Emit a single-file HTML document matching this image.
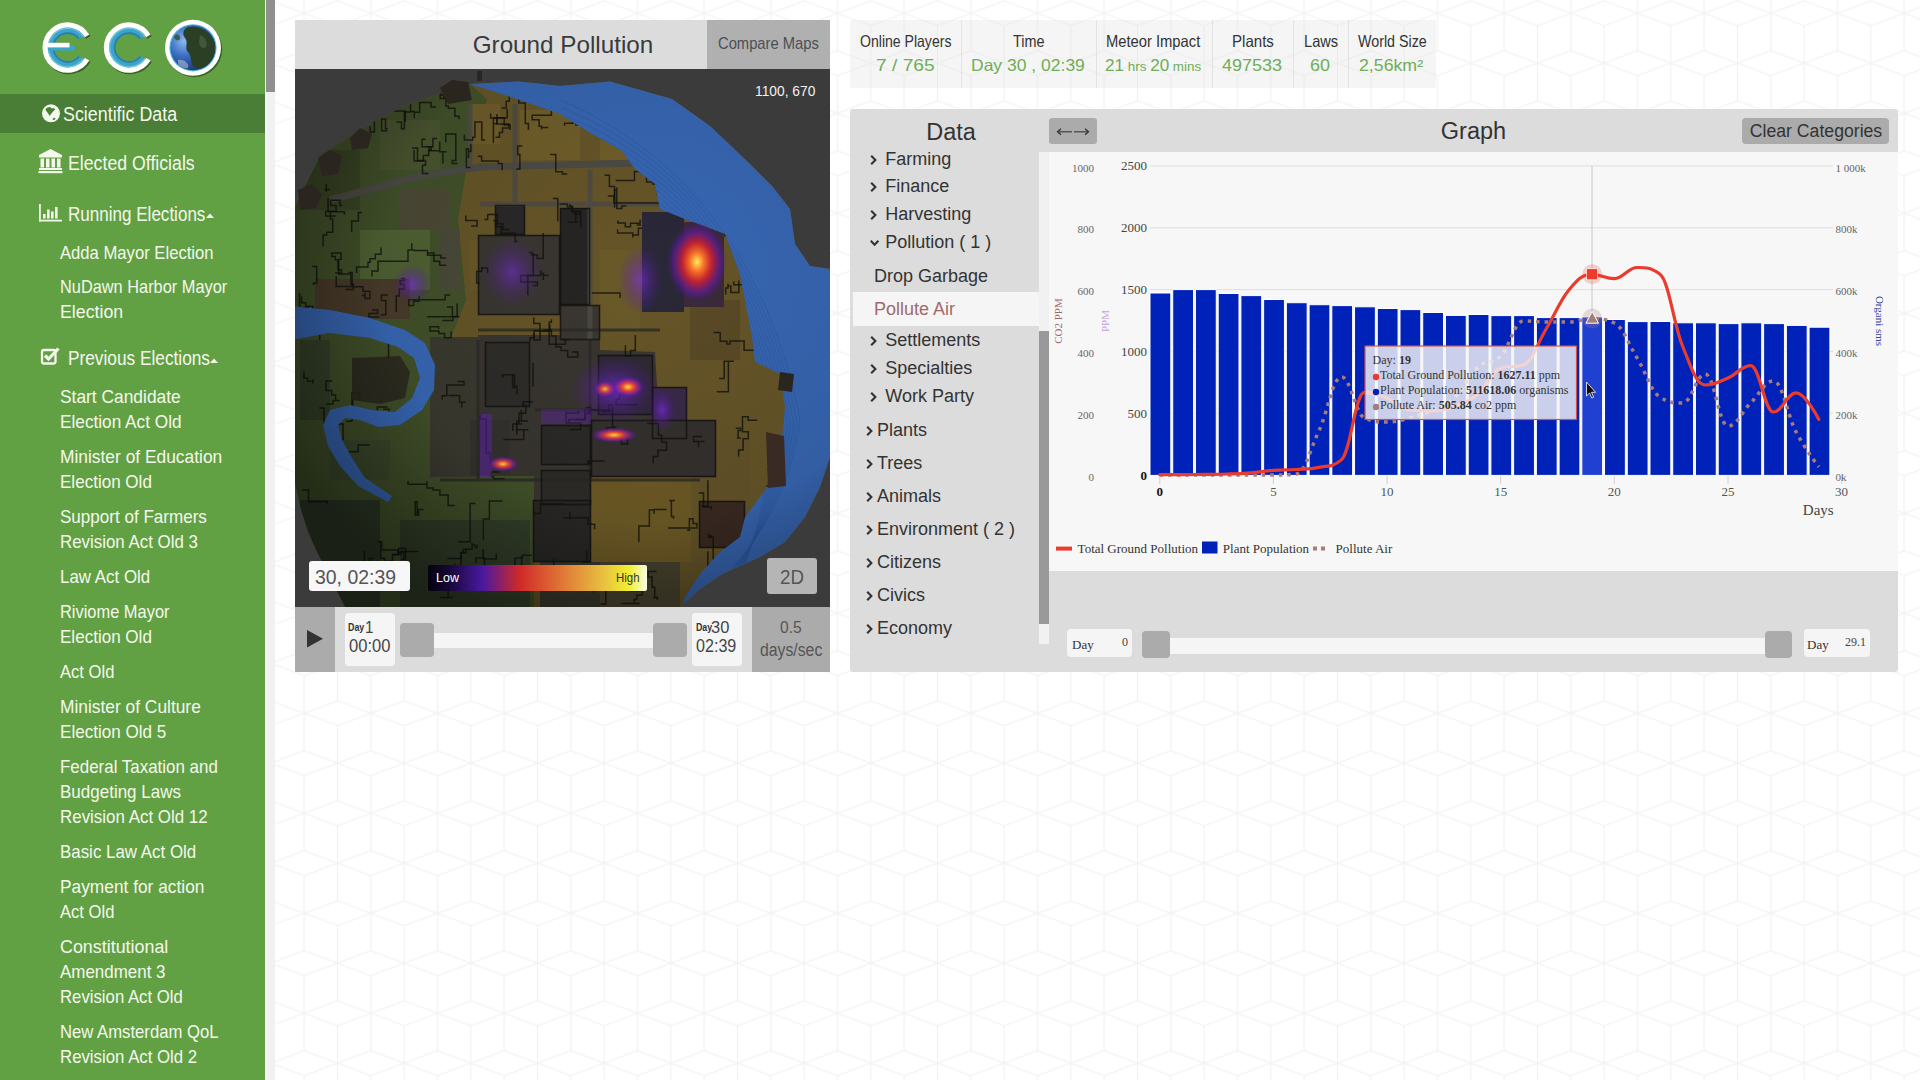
<!DOCTYPE html><html><head><meta charset="utf-8"><style>
html,body{margin:0;padding:0;width:1920px;height:1080px;overflow:hidden;background:#fff;}
body{position:relative;font-family:"Liberation Sans",sans-serif;}
.t{position:absolute;white-space:nowrap;}
.b{position:absolute;}
svg{position:absolute;}
</style></head><body>
<svg style="left:0;top:0" width="1920" height="1080">
<defs><pattern id="hex" x="37.5" y="0.7" width="66.667" height="100" patternUnits="userSpaceOnUse">
<g fill="none" stroke="#f0f0f0" stroke-width="1">
<path d="M0 12.5 L33.333 0 L66.667 12.5 L33.333 25 Z"/>
<path d="M0 12.5 V50 M66.667 12.5 V50 M33.333 25 V100"/>
<path d="M0 50 L33.333 62.5 L0 75 M66.667 50 L33.333 62.5 L66.667 75"/>
<path d="M0 75 V100 M66.667 75 V100 M0 0 V12.5 M66.667 0 V12.5"/>
</g></pattern></defs>
<rect x="275" y="0" width="1645" height="1080" fill="url(#hex)"/></svg>
<div class="b" style="left:0px;top:0px;width:265px;height:1080px;background:#62a044;"></div>
<div class="b" style="left:265px;top:0px;width:10px;height:1080px;background:#f1f1f1;"></div>
<div class="b" style="left:265px;top:92px;width:2px;height:988px;background:#fafafa;"></div>
<div class="b" style="left:266px;top:0px;width:9px;height:92px;background:#8f8f8f;"></div>
<div class="b" style="left:0px;top:94px;width:265px;height:39px;background:#4a7d35;"></div>
<svg style="left:30px;top:10px" width="210" height="80" viewBox="30 10 210 80">
<defs>
<radialGradient id="gl" cx="0.3" cy="0.35" r="0.75"><stop offset="0" stop-color="#8ab8f0"/><stop offset="0.45" stop-color="#3a6cc0"/><stop offset="1" stop-color="#14306a"/></radialGradient>
<linearGradient id="teal" x1="0" y1="0" x2="0" y2="1"><stop offset="0" stop-color="#2a8db8"/><stop offset="0.5" stop-color="#4fb8dc"/><stop offset="1" stop-color="#2a8db8"/></linearGradient>
<clipPath id="gclip"><circle cx="193" cy="47.8" r="22.5"/></clipPath>
</defs>
<g opacity="0.55" transform="translate(1.2,1.4)">
<path d="M87.07 35.96 A22.6 22.6 0 1 0 87.07 59.24" fill="none" stroke="#1a3010" stroke-width="5.2"/>
<path d="M148.37 35.96 A22.6 22.6 0 1 0 148.37 59.24" fill="none" stroke="#1a3010" stroke-width="5.2"/>
<circle cx="193" cy="47.8" r="28" fill="#1a3010"/>
</g>
<path d="M81.29 37.73 A16.8 16.8 0 1 0 81.29 57.47" fill="none" stroke="#3aa4cc" stroke-width="6.6"/>
<path d="M79.05 38.73 A14.4 14.4 0 1 0 79.05 56.47" fill="none" stroke="#2a7fa8" stroke-width="1.8"/>
<path d="M83.43 36.59 A19.2 19.2 0 1 0 83.43 58.61" fill="none" stroke="#6ec6e4" stroke-width="1.1"/>
<path d="M87.07 35.96 A22.6 22.6 0 1 0 87.07 59.24" fill="none" stroke="#fff" stroke-width="5.2"/>
<rect x="48" y="45.5" width="26.6" height="5" fill="#3aa4cc"/>
<rect x="44.5" y="42.8" width="25" height="4.6" fill="#fff"/>
<path d="M142.59 37.73 A16.8 16.8 0 1 0 142.59 57.47" fill="none" stroke="#3aa4cc" stroke-width="6.6"/>
<path d="M140.35 38.73 A14.4 14.4 0 1 0 140.35 56.47" fill="none" stroke="#2a7fa8" stroke-width="1.8"/>
<path d="M144.73 36.59 A19.2 19.2 0 1 0 144.73 58.61" fill="none" stroke="#6ec6e4" stroke-width="1.1"/>
<path d="M148.37 35.96 A22.6 22.6 0 1 0 148.37 59.24" fill="none" stroke="#fff" stroke-width="5.2"/>
<circle cx="193" cy="47.8" r="28" fill="#fff"/>
<circle cx="193" cy="47.8" r="23.6" fill="#52b4dc"/>
<circle cx="193" cy="47.8" r="22.5" fill="url(#gl)"/>
<g clip-path="url(#gclip)">
<path d="M188 27 C196 25 206 29 212 37 C217 46 216 56 209 64 C203 69 196 70 193 66 C190 61 192 56 188 52 C184 48 189 43 185 38 C182 34 183 29 188 27 Z" fill="#2b3f24"/>
<path d="M200 35 C205 37 208 42 206 47 C203 50 199 46 199 42 Z" fill="#4a5f40" opacity="0.8"/>
<path d="M174 36 C177 33 181 35 180 39 C178 42 174 40 174 36 Z" fill="#35502e" opacity="0.8"/>
<path d="M178 60 C184 59 190 64 188 68 C182 69 177 66 178 60 Z" fill="#d8e0e8" opacity="0.45"/>
</g>
</svg>
<svg style="left:36px;top:100px" width="30" height="130" viewBox="36 100 30 130">
<circle cx="51" cy="113.3" r="9" fill="#f4f8ec"/>
<path d="M45.3 109.2 L47.5 107.6 L50.2 107.1 L51.6 108.6 L53.4 108.1 L55.3 109.3 L53 111.6 L51 114 L49.6 115.9 L48.2 113.6 L46.6 111.6 Z" fill="#4a7d35"/>
<path d="M52.4 119.8 L53.6 117.8 L55.6 117.9 L54.4 120.1 Z" fill="#4a7d35"/>
<g fill="#f4f8ec">
<path d="M39 155 L50.5 149 L62 155 L62 157.5 L39 157.5 Z"/>
<rect x="40.5" y="158.5" width="3.5" height="9"/><rect x="46" y="158.5" width="3.5" height="9"/><rect x="51.5" y="158.5" width="3.5" height="9"/><rect x="57" y="158.5" width="3.5" height="9"/>
<rect x="39" y="168" width="23" height="2"/><rect x="38.5" y="171" width="24" height="2.2"/>
</g>
<g fill="#f4f8ec">
<rect x="39" y="204" width="1.8" height="17.5"/><rect x="39" y="219.7" width="23" height="1.8"/>
<rect x="43" y="214" width="2.6" height="4.5"/><rect x="47" y="209.5" width="2.6" height="9"/><rect x="51" y="211.5" width="2.6" height="7"/><rect x="55" y="207" width="2.6" height="11.5"/>
</g>
</svg>
<svg style="left:60.20px;top:94.80px;overflow:visible" width="120.2" height="36.0"><text x="3" y="26.00" textLength="114.20" lengthAdjust="spacingAndGlyphs" font-size="20" font-family="'Liberation Sans', sans-serif" font-weight="normal" fill="#f4f8ec" style="">Scientific Data</text></svg>
<svg style="left:64.80px;top:143.90px;overflow:visible" width="132.7" height="36.0"><text x="3" y="26.00" textLength="126.70" lengthAdjust="spacingAndGlyphs" font-size="20" font-family="'Liberation Sans', sans-serif" font-weight="normal" fill="#f4f8ec" style="">Elected Officials</text></svg>
<svg style="left:64.80px;top:194.50px;overflow:visible" width="143.4" height="36.0"><text x="3" y="26.00" textLength="137.40" lengthAdjust="spacingAndGlyphs" font-size="20" font-family="'Liberation Sans', sans-serif" font-weight="normal" fill="#f4f8ec" style="">Running Elections</text></svg>
<svg style="left:200px;top:210px" width="20" height="10" viewBox="200 210 20 10"><path d="M206 218 L210 213.5 L214 218 Z" fill="#f4f8ec"/></svg>
<svg style="left:36px;top:344px" width="30" height="26" viewBox="36 344 30 26">
<rect x="42" y="350" width="13.5" height="13.5" rx="2" fill="none" stroke="#f4f8ec" stroke-width="2.3"/>
<path d="M45 355.5 L48.5 359 L58.5 348.5" fill="none" stroke="#f4f8ec" stroke-width="3.2"/>
</svg>
<svg style="left:65.30px;top:339.30px;overflow:visible" width="148.0" height="36.0"><text x="3" y="26.00" textLength="142.00" lengthAdjust="spacingAndGlyphs" font-size="20" font-family="'Liberation Sans', sans-serif" font-weight="normal" fill="#f4f8ec" style="">Previous Elections</text></svg>
<svg style="left:205px;top:355px" width="20" height="10" viewBox="205 355 20 10"><path d="M210 363 L214 358.5 L218 363 Z" fill="#f4f8ec"/></svg>
<svg style="left:56.66px;top:233.50px;overflow:visible" width="159.6" height="34.2"><text x="3" y="24.70" textLength="153.60" lengthAdjust="spacingAndGlyphs" font-size="19" font-family="'Liberation Sans', sans-serif" font-weight="normal" fill="#f4f8ec" style="">Adda Mayor Election</text></svg>
<svg style="left:56.66px;top:268.30px;overflow:visible" width="173.2" height="34.2"><text x="3" y="24.70" textLength="167.20" lengthAdjust="spacingAndGlyphs" font-size="19" font-family="'Liberation Sans', sans-serif" font-weight="normal" fill="#f4f8ec" style="">NuDawn Harbor Mayor</text></svg>
<svg style="left:56.66px;top:293.30px;overflow:visible" width="69.2" height="34.2"><text x="3" y="24.70" textLength="63.20" lengthAdjust="spacingAndGlyphs" font-size="19" font-family="'Liberation Sans', sans-serif" font-weight="normal" fill="#f4f8ec" style="">Election</text></svg>
<svg style="left:56.66px;top:378.30px;overflow:visible" width="126.7" height="34.2"><text x="3" y="24.70" textLength="120.70" lengthAdjust="spacingAndGlyphs" font-size="19" font-family="'Liberation Sans', sans-serif" font-weight="normal" fill="#f4f8ec" style="">Start Candidate</text></svg>
<svg style="left:56.66px;top:403.30px;overflow:visible" width="127.6" height="34.2"><text x="3" y="24.70" textLength="121.60" lengthAdjust="spacingAndGlyphs" font-size="19" font-family="'Liberation Sans', sans-serif" font-weight="normal" fill="#f4f8ec" style="">Election Act Old</text></svg>
<svg style="left:56.66px;top:438.30px;overflow:visible" width="168.2" height="34.2"><text x="3" y="24.70" textLength="162.20" lengthAdjust="spacingAndGlyphs" font-size="19" font-family="'Liberation Sans', sans-serif" font-weight="normal" fill="#f4f8ec" style="">Minister of Education</text></svg>
<svg style="left:56.66px;top:463.30px;overflow:visible" width="97.9" height="34.2"><text x="3" y="24.70" textLength="91.90" lengthAdjust="spacingAndGlyphs" font-size="19" font-family="'Liberation Sans', sans-serif" font-weight="normal" fill="#f4f8ec" style="">Election Old</text></svg>
<svg style="left:56.66px;top:498.30px;overflow:visible" width="152.9" height="34.2"><text x="3" y="24.70" textLength="146.90" lengthAdjust="spacingAndGlyphs" font-size="19" font-family="'Liberation Sans', sans-serif" font-weight="normal" fill="#f4f8ec" style="">Support of Farmers</text></svg>
<svg style="left:56.66px;top:523.30px;overflow:visible" width="143.9" height="34.2"><text x="3" y="24.70" textLength="137.90" lengthAdjust="spacingAndGlyphs" font-size="19" font-family="'Liberation Sans', sans-serif" font-weight="normal" fill="#f4f8ec" style="">Revision Act Old 3</text></svg>
<svg style="left:56.66px;top:558.30px;overflow:visible" width="96.2" height="34.2"><text x="3" y="24.70" textLength="90.20" lengthAdjust="spacingAndGlyphs" font-size="19" font-family="'Liberation Sans', sans-serif" font-weight="normal" fill="#f4f8ec" style="">Law Act Old</text></svg>
<svg style="left:56.66px;top:593.30px;overflow:visible" width="115.5" height="34.2"><text x="3" y="24.70" textLength="109.50" lengthAdjust="spacingAndGlyphs" font-size="19" font-family="'Liberation Sans', sans-serif" font-weight="normal" fill="#f4f8ec" style="">Riviome Mayor</text></svg>
<svg style="left:56.66px;top:618.30px;overflow:visible" width="97.9" height="34.2"><text x="3" y="24.70" textLength="91.90" lengthAdjust="spacingAndGlyphs" font-size="19" font-family="'Liberation Sans', sans-serif" font-weight="normal" fill="#f4f8ec" style="">Election Old</text></svg>
<svg style="left:56.66px;top:653.30px;overflow:visible" width="60.4" height="34.2"><text x="3" y="24.70" textLength="54.40" lengthAdjust="spacingAndGlyphs" font-size="19" font-family="'Liberation Sans', sans-serif" font-weight="normal" fill="#f4f8ec" style="">Act Old</text></svg>
<svg style="left:56.66px;top:688.30px;overflow:visible" width="146.8" height="34.2"><text x="3" y="24.70" textLength="140.80" lengthAdjust="spacingAndGlyphs" font-size="19" font-family="'Liberation Sans', sans-serif" font-weight="normal" fill="#f4f8ec" style="">Minister of Culture</text></svg>
<svg style="left:56.66px;top:713.30px;overflow:visible" width="112.2" height="34.2"><text x="3" y="24.70" textLength="106.20" lengthAdjust="spacingAndGlyphs" font-size="19" font-family="'Liberation Sans', sans-serif" font-weight="normal" fill="#f4f8ec" style="">Election Old 5</text></svg>
<svg style="left:56.66px;top:748.30px;overflow:visible" width="163.8" height="34.2"><text x="3" y="24.70" textLength="157.80" lengthAdjust="spacingAndGlyphs" font-size="19" font-family="'Liberation Sans', sans-serif" font-weight="normal" fill="#f4f8ec" style="">Federal Taxation and</text></svg>
<svg style="left:56.66px;top:773.30px;overflow:visible" width="127.0" height="34.2"><text x="3" y="24.70" textLength="121.00" lengthAdjust="spacingAndGlyphs" font-size="19" font-family="'Liberation Sans', sans-serif" font-weight="normal" fill="#f4f8ec" style="">Budgeting Laws</text></svg>
<svg style="left:56.66px;top:798.30px;overflow:visible" width="153.7" height="34.2"><text x="3" y="24.70" textLength="147.70" lengthAdjust="spacingAndGlyphs" font-size="19" font-family="'Liberation Sans', sans-serif" font-weight="normal" fill="#f4f8ec" style="">Revision Act Old 12</text></svg>
<svg style="left:56.66px;top:833.30px;overflow:visible" width="142.2" height="34.2"><text x="3" y="24.70" textLength="136.20" lengthAdjust="spacingAndGlyphs" font-size="19" font-family="'Liberation Sans', sans-serif" font-weight="normal" fill="#f4f8ec" style="">Basic Law Act Old</text></svg>
<svg style="left:56.66px;top:868.30px;overflow:visible" width="150.4" height="34.2"><text x="3" y="24.70" textLength="144.40" lengthAdjust="spacingAndGlyphs" font-size="19" font-family="'Liberation Sans', sans-serif" font-weight="normal" fill="#f4f8ec" style="">Payment for action</text></svg>
<svg style="left:56.66px;top:893.30px;overflow:visible" width="60.4" height="34.2"><text x="3" y="24.70" textLength="54.40" lengthAdjust="spacingAndGlyphs" font-size="19" font-family="'Liberation Sans', sans-serif" font-weight="normal" fill="#f4f8ec" style="">Act Old</text></svg>
<svg style="left:56.66px;top:928.30px;overflow:visible" width="114.3" height="34.2"><text x="3" y="24.70" textLength="108.30" lengthAdjust="spacingAndGlyphs" font-size="19" font-family="'Liberation Sans', sans-serif" font-weight="normal" fill="#f4f8ec" style="">Constitutional</text></svg>
<svg style="left:56.66px;top:953.30px;overflow:visible" width="111.5" height="34.2"><text x="3" y="24.70" textLength="105.50" lengthAdjust="spacingAndGlyphs" font-size="19" font-family="'Liberation Sans', sans-serif" font-weight="normal" fill="#f4f8ec" style="">Amendment 3</text></svg>
<svg style="left:56.66px;top:978.30px;overflow:visible" width="128.8" height="34.2"><text x="3" y="24.70" textLength="122.80" lengthAdjust="spacingAndGlyphs" font-size="19" font-family="'Liberation Sans', sans-serif" font-weight="normal" fill="#f4f8ec" style="">Revision Act Old</text></svg>
<svg style="left:56.66px;top:1013.30px;overflow:visible" width="164.5" height="34.2"><text x="3" y="24.70" textLength="158.50" lengthAdjust="spacingAndGlyphs" font-size="19" font-family="'Liberation Sans', sans-serif" font-weight="normal" fill="#f4f8ec" style="">New Amsterdam QoL</text></svg>
<svg style="left:56.66px;top:1038.30px;overflow:visible" width="143.2" height="34.2"><text x="3" y="24.70" textLength="137.20" lengthAdjust="spacingAndGlyphs" font-size="19" font-family="'Liberation Sans', sans-serif" font-weight="normal" fill="#f4f8ec" style="">Revision Act Old 2</text></svg>
<div class="b" style="left:295px;top:20px;width:535px;height:49px;background:#dcdcdc;"></div>
<div class="b" style="left:707px;top:20px;width:123px;height:49px;background:#b0b0b0;"></div>
<div class="t" style="left:-37.50px;width:1200px;top:32.58px;font-size:24px;line-height:24px;color:#3a3a3a;font-family:'Liberation Sans', sans-serif;text-align:center;font-weight:normal;transform:scaleX(1.01);transform-origin:50% 0;">Ground Pollution</div>
<svg style="left:715.17px;top:27.10px;overflow:visible" width="106.9" height="30.6"><text x="3" y="22.10" textLength="100.90" lengthAdjust="spacingAndGlyphs" font-size="17" font-family="'Liberation Sans', sans-serif" font-weight="normal" fill="#4a4f55" style="">Compare Maps</text></svg>
<svg style="left:295px;top:69px" width="535" height="538" viewBox="295 69 535 538">
<defs><clipPath id="globe"><path d="M295.0 484.0 L295.0 206.0 L320.0 156.0 L357.0 131.0 L400.0 108.0 L432.0 96.0 L470.0 84.0 L519.0 81.5 L560.0 86.0 L610.0 81.5 L672.0 99.0 L710.0 126.0 L750.0 164.0 L772.0 186.0 L790.0 209.0 L795.0 244.0 L810.0 266.0 L830.0 269.0 L830.0 457.0 L820.0 487.0 L805.0 517.0 L785.0 542.0 L760.0 557.0 L722.0 574.0 L700.0 589.0 L682.0 605.0 L680.0 607.0 L345.0 607.0 L330.0 578.0 L316.0 550.0 L308.0 532.0 L301.0 510.0 Z"/></clipPath>
<radialGradient id="shade" cx="0.6" cy="0.38" r="0.68">
<stop offset="0" stop-color="#000" stop-opacity="0"/><stop offset="0.65" stop-color="#000" stop-opacity="0.08"/><stop offset="1" stop-color="#000" stop-opacity="0.45"/></radialGradient>
<radialGradient id="heat1"><stop offset="0" stop-color="#fff060"/><stop offset="0.22" stop-color="#ff7a28"/><stop offset="0.5" stop-color="#d82030" stop-opacity="0.85"/><stop offset="0.78" stop-color="#6a18b0" stop-opacity="0.55"/><stop offset="1" stop-color="#5010a0" stop-opacity="0"/></radialGradient>
<radialGradient id="heat2"><stop offset="0" stop-color="#ffe048"/><stop offset="0.35" stop-color="#f04a30"/><stop offset="0.7" stop-color="#9020b0" stop-opacity="0.6"/><stop offset="1" stop-color="#4010a0" stop-opacity="0"/></radialGradient>
<radialGradient id="purp"><stop offset="0" stop-color="#7a2ee0" stop-opacity="0.8"/><stop offset="1" stop-color="#5010a0" stop-opacity="0"/></radialGradient>
<linearGradient id="cbar" x1="0" x2="1"><stop offset="0" stop-color="#050210"/><stop offset="0.08" stop-color="#12062e"/><stop offset="0.25" stop-color="#4a18a0"/><stop offset="0.42" stop-color="#d02a28"/><stop offset="0.62" stop-color="#e07a38"/><stop offset="0.8" stop-color="#e8c040"/><stop offset="0.92" stop-color="#f0f030"/><stop offset="1" stop-color="#fbfbe8"/></linearGradient>
</defs>
<rect x="295" y="69" width="535" height="538" fill="#3b3b3b"/>
<g clip-path="url(#globe)">
<rect x="290" y="60" width="600" height="560" fill="#665528"/>
<path d="M290.0 140.0 L470.0 84.0 L487.0 99.0 L468.0 160.0 L458.0 220.0 L466.0 300.0 L448.0 345.0 L432.0 420.0 L440.0 476.0 L534.0 476.0 L534.0 607.0 L290.0 607.0 Z" fill="#42512a"/>
<path d="M478.0 335.0 L600.0 335.0 L600.0 350.0 L655.0 352.0 L662.0 470.0 L590.0 476.0 L590.0 562.0 L534.0 562.0 L534.0 476.0 L478.0 476.0 Z" fill="#393631"/>
<rect x="300" y="150" width="60" height="60" fill="#3a4624"/>
<rect x="380" y="120" width="60" height="50" fill="#4a5530"/>
<rect x="400" y="190" width="50" height="40" fill="#4c4a36"/>
<rect x="360" y="230" width="70" height="60" fill="#506234"/>
<rect x="315" y="279" width="95" height="40" fill="#4a3c2a"/>
<rect x="300" y="340" width="30" height="80" fill="#36432a"/>
<rect x="440" y="230" width="20" height="60" fill="#4a4a3a"/>
<rect x="330" y="440" width="60" height="40" fill="#3c4a2c"/>
<rect x="300" y="500" width="80" height="107" fill="#2f3a26"/>
<rect x="400" y="520" width="130" height="87" fill="#34402a"/>
<rect x="470" y="104" width="30" height="40" fill="#6e5c2a"/>
<rect x="520" y="110" width="60" height="50" fill="#705e2a"/>
<rect x="600" y="120" width="40" height="40" fill="#705e2a"/>
<rect x="470" y="240" width="30" height="50" fill="#6a5828"/>
<rect x="600" y="250" width="40" height="80" fill="#6a5a2a"/>
<rect x="495" y="205" width="30" height="30" fill="#2a2828"/>
<rect x="560" y="208" width="30" height="97" fill="#272523"/>
<rect x="485" y="342" width="45" height="65" fill="#2e2d2a"/>
<rect x="541" y="425" width="50" height="40" fill="#2c2a28"/>
<rect x="541" y="470" width="50" height="35" fill="#2e2c29"/>
<rect x="533" y="500" width="58" height="62" fill="#2a2826"/>
<rect x="598" y="355" width="55" height="60" fill="#2e2a32"/>
<rect x="652" y="387" width="35" height="52" fill="#3a2a48"/>
<rect x="591" y="476" width="100" height="86" fill="#6e5b26"/>
<rect x="700" y="440" width="50" height="90" fill="#64532a"/>
<rect x="690" y="300" width="50" height="60" fill="#5a4a26"/>
<rect x="478" y="235" width="82" height="80" fill="#3a3732"/>
<rect x="591" y="420" width="125" height="57" fill="#34312e"/>
<rect x="430" y="337" width="50" height="140" fill="#3a3a30"/>
<rect x="699" y="501" width="46" height="47" fill="#3a2a22"/>
<rect x="560" y="305" width="40" height="35" fill="#3a3732"/>
<rect x="600" y="562" width="80" height="45" fill="#4a4530"/>
<rect x="540" y="562" width="60" height="45" fill="#3a3a30"/>
<rect x="470" y="420" width="40" height="55" fill="#33322e"/>
<path d="M330 200 L420 176 L480 167 L640 163" stroke="#4c4b45" stroke-width="7" fill="none"/>
<path d="M515 104 V205 M590 170 V340 M480 204 H700 M470 104 V165" stroke="#4c4b45" stroke-width="5" fill="none" opacity="0.85"/>
<path d="M478 330 H660 M478 340 V480 M535 410 H600 M590 340 V480 M440 480 H700" stroke="#2a2926" stroke-width="3" fill="none" opacity="0.8"/>
<path d="M512.6 375.5 L512.6 378.4 L512.6 381.4 L512.6 387.8 L516.9 387.8 L516.9 394.0 L516.9 389.0 L516.9 386.0 L514.5 386.0 L514.5 379.3 L514.5 374.8 L511.9 374.8 L506.5 374.8 L502.6 374.8 L502.6 377.8" stroke="#12110c" stroke-width="1.5" fill="none" opacity="0.8"/>
<path d="M446.3 97.7 L448.8 97.7 L444.0 97.7 L444.0 95.1 L440.9 95.1 L440.9 91.6 L434.6 91.6 L434.6 88.5 L431.2 88.5" stroke="#12110c" stroke-width="1.5" fill="none" opacity="0.8"/>
<path d="M573.9 213.9 L580.7 213.9 L580.7 216.9 L580.7 220.1 L580.7 223.1 L580.7 227.2 L580.7 224.0 L580.7 219.0 L580.7 216.7 L580.7 211.6 L578.6 211.6 L575.7 211.6 L571.9 211.6 L571.9 206.1 L569.8 206.1 L569.8 204.0" stroke="#12110c" stroke-width="1.5" fill="none" opacity="0.8"/>
<path d="M643.3 252.6 L643.3 247.0 L643.3 241.0 L643.3 234.5 L643.3 228.2 L638.4 228.2 L638.4 235.1 L632.7 235.1 L632.7 237.6 L632.7 233.1 L627.7 233.1 L624.2 233.1 L617.6 233.1 L617.6 229.5" stroke="#12110c" stroke-width="1.5" fill="none" opacity="0.8"/>
<path d="M502.5 501.1 L495.9 501.1 L489.4 501.1 L489.4 507.2 L489.4 513.3 L489.4 518.9 L483.3 518.9 L483.3 522.3 L483.3 527.5 L483.3 530.8 L483.3 533.4 L483.3 537.3 L483.3 540.5" stroke="#12110c" stroke-width="1.5" fill="none" opacity="0.8"/>
<path d="M551.4 108.4 L551.4 115.2 L545.1 115.2 L538.7 115.2 L532.2 115.2 L532.2 119.7 L539.1 119.7 L539.1 126.3 L541.6 126.3 L541.6 129.6 L541.6 127.4 L548.2 127.4" stroke="#12110c" stroke-width="1.5" fill="none" opacity="0.8"/>
<path d="M501.6 107.9 L506.2 107.9 L506.2 101.2 L509.3 101.2 L509.3 96.0 L509.3 92.4 L509.3 89.4 L509.3 84.5 L509.3 79.5 L509.3 75.5 L503.8 75.5 L510.6 75.5 L513.3 75.5 L513.3 71.1" stroke="#12110c" stroke-width="1.5" fill="none" opacity="0.8"/>
<path d="M590.4 561.9 L587.3 561.9 L582.2 561.9 L586.7 561.9 L586.7 557.7 L586.7 554.9 L586.7 550.3" stroke="#12110c" stroke-width="1.5" fill="none" opacity="0.8"/>
<path d="M702.7 208.7 L702.7 202.2 L705.2 202.2 L709.1 202.2 L709.1 196.7 L709.1 194.2 L709.1 190.4 L716.1 190.4 L718.2 190.4 L718.2 186.0 L721.0 186.0 L721.0 183.3" stroke="#12110c" stroke-width="1.5" fill="none" opacity="0.8"/>
<path d="M345.5 289.4 L349.3 289.4 L353.4 289.4 L353.4 284.3 L350.9 284.3 L350.9 277.6 L350.9 273.9 L345.2 273.9 L341.6 273.9 L338.7 273.9 L338.7 270.4 L338.7 263.9 L338.7 260.4" stroke="#12110c" stroke-width="1.5" fill="none" opacity="0.8"/>
<path d="M385.5 129.2 L385.5 122.3 L385.5 119.0 L381.6 119.0 L381.6 123.8 L381.6 130.7 L386.6 130.7 L386.6 127.9" stroke="#12110c" stroke-width="1.5" fill="none" opacity="0.8"/>
<path d="M532.9 401.7 L528.3 401.7 L523.0 401.7 L523.0 405.2 L525.8 405.2 L525.8 410.9 L525.8 413.3 L518.9 413.3 L518.9 418.9 L518.9 423.9 L521.9 423.9 L517.7 423.9 L512.8 423.9 L512.8 430.9" stroke="#12110c" stroke-width="1.5" fill="none" opacity="0.8"/>
<path d="M412.1 148.1 L417.5 148.1 L417.5 153.8 L417.5 160.4 L420.8 160.4 L425.5 160.4 L425.5 165.2 L422.5 165.2 L422.5 167.5 L422.5 173.4 L428.5 173.4" stroke="#12110c" stroke-width="1.5" fill="none" opacity="0.8"/>
<path d="M764.9 255.9 L762.4 255.9 L757.6 255.9 L751.7 255.9 L751.7 253.5 L751.7 250.1 L751.7 246.3 L751.7 239.7 L757.7 239.7 L764.4 239.7 L768.2 239.7 L771.2 239.7 L771.2 233.5 L771.2 227.1 L771.2 231.8 L771.2 237.9 L771.2 240.3" stroke="#12110c" stroke-width="1.5" fill="none" opacity="0.8"/>
<path d="M722.6 133.2 L717.0 133.2 L712.7 133.2 L710.0 133.2 L704.9 133.2 L704.9 129.5 L700.6 129.5 L698.6 129.5 L698.6 132.7 L698.6 136.3 L705.0 136.3 L707.8 136.3 L707.8 138.4 L710.8 138.4 L710.8 142.7 L710.8 146.7 L710.8 153.5" stroke="#12110c" stroke-width="1.5" fill="none" opacity="0.8"/>
<path d="M527.8 295.3 L527.8 291.3 L527.8 284.5 L527.8 282.2 L527.8 275.6 L534.2 275.6 L540.8 275.6 L540.8 270.5 L540.8 273.4 L543.4 273.4 L543.4 279.9 L543.4 275.2 L546.4 275.2 L548.5 275.2" stroke="#12110c" stroke-width="1.5" fill="none" opacity="0.8"/>
<path d="M744.9 581.6 L748.4 581.6 L753.9 581.6 L747.0 581.6 L743.1 581.6 L743.1 585.9 L743.1 588.9 L747.8 588.9 L753.2 588.9 L753.2 592.6 L753.2 596.2 L755.6 596.2 L759.7 596.2" stroke="#12110c" stroke-width="1.5" fill="none" opacity="0.8"/>
<path d="M342.3 205.6 L340.0 205.6 L340.0 200.3 L336.3 200.3 L330.8 200.3 L330.8 205.4 L336.1 205.4 L336.1 211.3 L330.2 211.3 L325.7 211.3 L325.7 215.9 L332.5 215.9 L335.7 215.9" stroke="#12110c" stroke-width="1.5" fill="none" opacity="0.8"/>
<path d="M454.7 563.8 L454.7 568.1 L454.7 572.8 L449.0 572.8 L442.3 572.8 L448.1 572.8 L448.1 578.9 L448.1 585.5 L448.1 591.8 L448.1 597.6 L452.7 597.6 L450.1 597.6 L444.2 597.6 L439.7 597.6" stroke="#12110c" stroke-width="1.5" fill="none" opacity="0.8"/>
<path d="M721.4 555.7 L721.4 560.0 L721.4 562.6 L716.8 562.6 L716.8 559.1 L713.2 559.1 L713.2 555.9 L713.2 549.0 L713.2 544.3 L713.2 537.3 L708.5 537.3 L708.5 533.2 L708.5 535.8 L712.0 535.8" stroke="#12110c" stroke-width="1.5" fill="none" opacity="0.8"/>
<path d="M380.8 314.8 L385.8 314.8 L385.8 311.3 L385.8 306.9 L385.8 300.4 L381.4 300.4 L381.4 297.4 L381.4 295.1 L387.9 295.1" stroke="#12110c" stroke-width="1.5" fill="none" opacity="0.8"/>
<path d="M363.4 444.9 L369.7 444.9 L364.1 444.9 L358.1 444.9 L358.1 451.8 L355.4 451.8 L348.8 451.8 L353.8 451.8" stroke="#12110c" stroke-width="1.5" fill="none" opacity="0.8"/>
<path d="M567.2 173.9 L562.5 173.9 L562.5 171.7 L555.8 171.7 L555.8 166.5 L555.8 161.9 L555.8 157.3 L555.8 154.5 L550.0 154.5" stroke="#12110c" stroke-width="1.5" fill="none" opacity="0.8"/>
<path d="M410.9 339.5 L405.9 339.5 L405.9 342.4 L401.7 342.4 L401.7 340.0 L401.7 334.0 L399.5 334.0 L399.5 330.7 L399.5 333.6 L399.5 339.7 L395.7 339.7" stroke="#12110c" stroke-width="1.5" fill="none" opacity="0.8"/>
<path d="M319.8 339.7 L319.8 332.7 L319.8 330.3 L319.8 323.4 L319.8 318.4 L319.8 314.3 L313.1 314.3 L308.1 314.3 L308.1 307.7 L301.8 307.7 L299.6 307.7 L299.6 301.7 L299.6 295.9 L299.6 293.0" stroke="#12110c" stroke-width="1.5" fill="none" opacity="0.8"/>
<path d="M497.0 114.1 L497.0 118.6 L497.0 123.9 L502.7 123.9 L508.9 123.9 L508.9 128.1 L502.5 128.1 L502.5 132.6 L499.4 132.6 L499.4 137.2 L495.5 137.2" stroke="#12110c" stroke-width="1.5" fill="none" opacity="0.8"/>
<path d="M551.4 319.2 L551.4 322.3 L549.2 322.3 L549.2 328.4 L549.2 334.9 L549.2 341.7 L549.2 344.2 L553.2 344.2 L555.9 344.2 L561.3 344.2 L565.4 344.2 L565.4 339.4 L569.2 339.4 L564.7 339.4 L561.5 339.4" stroke="#12110c" stroke-width="1.5" fill="none" opacity="0.8"/>
<path d="M719.1 378.5 L724.2 378.5 L724.2 371.8 L724.2 367.7 L724.2 361.3 L726.9 361.3 L733.8 361.3 L728.4 361.3 L728.4 365.3 L728.4 370.1 L728.4 376.9 L728.4 380.5 L728.4 387.3 L728.4 391.7 L722.6 391.7 L719.0 391.7 L716.7 391.7" stroke="#12110c" stroke-width="1.5" fill="none" opacity="0.8"/>
<path d="M631.2 147.5 L637.6 147.5 L642.1 147.5 L642.1 144.3 L647.9 144.3 L647.9 140.2 L647.9 134.1" stroke="#12110c" stroke-width="1.5" fill="none" opacity="0.8"/>
<path d="M614.6 207.8 L614.6 201.1 L614.6 197.0 L614.6 190.1 L616.8 190.1 L616.8 187.5 L616.8 191.9 L616.8 198.1 L616.8 203.9 L616.8 208.6 L619.3 208.6 L621.9 208.6 L621.9 205.9 L626.4 205.9" stroke="#12110c" stroke-width="1.5" fill="none" opacity="0.8"/>
<path d="M324.1 122.8 L328.5 122.8 L328.5 118.4 L330.8 118.4 L330.8 115.0 L330.8 110.8 L332.9 110.8" stroke="#12110c" stroke-width="1.5" fill="none" opacity="0.8"/>
<path d="M335.1 273.1 L341.5 273.1 L341.5 269.7 L338.0 269.7 L338.0 263.9 L338.0 259.8 L335.3 259.8 L335.3 256.5 L331.7 256.5 L331.7 253.1 L334.4 253.1 L337.1 253.1 L341.1 253.1 L341.1 259.3 L338.8 259.3" stroke="#12110c" stroke-width="1.5" fill="none" opacity="0.8"/>
<path d="M451.1 331.4 L451.1 337.8 L444.5 337.8 L444.5 335.8 L444.5 333.5 L438.9 333.5 L438.9 330.9 L434.6 330.9 L429.9 330.9 L429.9 326.7 L433.5 326.7 L438.6 326.7 L438.6 328.9" stroke="#12110c" stroke-width="1.5" fill="none" opacity="0.8"/>
<path d="M721.8 146.6 L721.8 142.1 L721.8 147.6 L717.1 147.6 L711.9 147.6 L711.9 152.1 L711.9 157.9 L711.9 160.7" stroke="#12110c" stroke-width="1.5" fill="none" opacity="0.8"/>
<path d="M317.3 266.4 L312.2 266.4 L316.7 266.4 L316.7 269.9 L316.7 276.9 L316.7 283.1 L313.6 283.1 L313.6 285.3" stroke="#12110c" stroke-width="1.5" fill="none" opacity="0.8"/>
<path d="M461.7 407.7 L461.7 402.2 L465.7 402.2 L459.6 402.2 L459.6 395.5 L454.7 395.5 L448.5 395.5" stroke="#12110c" stroke-width="1.5" fill="none" opacity="0.8"/>
<path d="M738.8 287.7 L738.8 283.9 L738.8 280.5 L738.8 282.6 L738.8 286.5 L738.8 292.4 L735.8 292.4 L730.8 292.4 L730.8 286.0 L728.0 286.0 L728.0 283.7 L728.0 287.9 L725.7 287.9 L725.7 294.5" stroke="#12110c" stroke-width="1.5" fill="none" opacity="0.8"/>
<path d="M533.8 513.5 L540.5 513.5 L540.5 508.2 L540.5 504.0 L546.7 504.0 L551.5 504.0 L558.5 504.0 L563.8 504.0" stroke="#12110c" stroke-width="1.5" fill="none" opacity="0.8"/>
<path d="M465.8 215.4 L465.8 220.4 L472.3 220.4 L477.1 220.4 L477.1 225.9 L471.1 225.9 L474.6 225.9" stroke="#12110c" stroke-width="1.5" fill="none" opacity="0.8"/>
<path d="M531.9 555.2 L528.8 555.2 L522.4 555.2 L522.4 557.9 L517.2 557.9 L514.8 557.9 L514.8 561.5 L514.8 564.3 L514.8 569.7 L521.6 569.7 L521.6 565.8 L521.6 562.1 L521.6 555.9" stroke="#12110c" stroke-width="1.5" fill="none" opacity="0.8"/>
<path d="M326.3 183.7 L326.3 186.8 L326.3 192.0 L326.3 189.5 L324.2 189.5 L327.6 189.5 L330.0 189.5" stroke="#12110c" stroke-width="1.5" fill="none" opacity="0.8"/>
<path d="M637.3 404.7 L631.9 404.7 L626.0 404.7 L621.8 404.7 L616.1 404.7 L616.1 399.3 L619.6 399.3 L619.6 396.3 L619.6 393.7 L623.8 393.7 L623.8 389.2 L623.8 386.7 L623.8 383.7 L628.8 383.7" stroke="#12110c" stroke-width="1.5" fill="none" opacity="0.8"/>
<path d="M569.9 519.6 L569.9 515.6 L569.9 511.8 L569.9 517.8 L563.4 517.8 L568.0 517.8 L573.1 517.8 L580.1 517.8 L584.5 517.8 L588.0 517.8 L588.0 524.2 L591.0 524.2 L594.6 524.2 L594.6 529.2" stroke="#12110c" stroke-width="1.5" fill="none" opacity="0.8"/>
<path d="M351.9 272.6 L348.6 272.6 L352.1 272.6 L352.1 275.4 L352.1 280.1 L352.1 286.7 L358.7 286.7 L363.0 286.7 L363.0 291.2 L369.8 291.2 L369.8 293.6 L369.8 296.2 L369.8 298.5 L364.9 298.5 L364.9 292.6 L364.9 295.5 L361.9 295.5" stroke="#12110c" stroke-width="1.5" fill="none" opacity="0.8"/>
<path d="M528.4 130.1 L528.4 123.6 L525.3 123.6 L525.3 117.3 L525.3 112.2 L525.3 105.7 L525.3 103.0 L521.8 103.0 L518.8 103.0 L518.8 97.6 L518.8 94.5 L521.9 94.5 L524.2 94.5 L524.2 90.8 L527.2 90.8" stroke="#12110c" stroke-width="1.5" fill="none" opacity="0.8"/>
<path d="M403.8 558.6 L403.8 555.3 L403.8 552.3 L398.2 552.3 L398.2 549.9 L394.1 549.9 L387.6 549.9 L381.6 549.9 L381.6 546.1 L381.6 541.7 L377.7 541.7 L380.8 541.7 L380.8 545.4 L380.8 552.1 L380.8 558.5 L384.6 558.5 L384.6 560.9" stroke="#12110c" stroke-width="1.5" fill="none" opacity="0.8"/>
<path d="M323.1 246.5 L323.1 241.8 L323.1 235.1 L326.7 235.1 L326.7 232.3 L332.7 232.3 L332.7 226.1 L332.7 219.2 L330.4 219.2 L330.4 216.1 L330.4 211.6" stroke="#12110c" stroke-width="1.5" fill="none" opacity="0.8"/>
<path d="M385.8 97.7 L390.9 97.7 L390.9 94.2 L390.9 90.1 L397.5 90.1 L397.5 83.7 L397.5 80.2 L402.4 80.2 L404.9 80.2 L404.9 75.7 L406.9 75.7 L406.9 70.6" stroke="#12110c" stroke-width="1.5" fill="none" opacity="0.8"/>
<path d="M533.8 335.7 L533.8 333.5 L533.8 337.5 L533.8 340.0 L540.1 340.0 L540.1 335.5 L540.1 331.2 L543.4 331.2 L549.8 331.2 L549.8 329.0 L549.8 324.6" stroke="#12110c" stroke-width="1.5" fill="none" opacity="0.8"/>
<path d="M487.9 569.3 L484.5 569.3 L484.5 563.4 L484.5 557.7 L480.5 557.7 L476.0 557.7 L476.0 559.8 L476.0 563.0" stroke="#12110c" stroke-width="1.5" fill="none" opacity="0.8"/>
<path d="M372.0 310.0 L375.4 310.0 L377.7 310.0 L377.7 313.5 L374.6 313.5 L369.0 313.5 L369.0 316.9 L373.0 316.9 L379.3 316.9" stroke="#12110c" stroke-width="1.5" fill="none" opacity="0.8"/>
<path d="M401.3 559.3 L405.6 559.3 L405.6 552.6 L405.6 548.5 L398.7 548.5 L398.7 554.5 L392.7 554.5 L399.6 554.5" stroke="#12110c" stroke-width="1.5" fill="none" opacity="0.8"/>
<path d="M418.7 551.4 L413.7 551.4 L407.7 551.4 L401.4 551.4 L401.4 554.6 L395.7 554.6 L392.5 554.6 L392.5 561.2 L386.3 561.2 L386.3 567.6 L383.0 567.6" stroke="#12110c" stroke-width="1.5" fill="none" opacity="0.8"/>
<path d="M396.2 311.9 L396.2 306.8 L396.2 302.1 L396.2 296.1 L399.3 296.1 L399.3 289.1 L404.3 289.1 L404.3 284.3 L400.2 284.3 L400.2 280.8 L404.7 280.8 L404.7 278.4 L400.9 278.4" stroke="#12110c" stroke-width="1.5" fill="none" opacity="0.8"/>
<path d="M620.1 297.9 L620.1 293.0 L614.3 293.0 L607.7 293.0 L601.2 293.0 L598.9 293.0 L596.8 293.0 L594.8 293.0 L591.7 293.0" stroke="#12110c" stroke-width="1.5" fill="none" opacity="0.8"/>
<path d="M571.8 352.0 L577.8 352.0 L577.8 355.0 L577.8 357.1 L572.8 357.1 L567.7 357.1 L567.7 350.6 L561.1 350.6 L561.1 346.8 L555.9 346.8 L555.9 343.9 L555.9 339.6 L555.9 336.0 L551.4 336.0 L551.4 330.1 L547.8 330.1 L543.1 330.1" stroke="#12110c" stroke-width="1.5" fill="none" opacity="0.8"/>
<path d="M496.3 553.5 L496.3 559.0 L491.5 559.0 L488.0 559.0 L483.1 559.0 L483.1 554.7 L483.1 548.9" stroke="#12110c" stroke-width="1.5" fill="none" opacity="0.8"/>
<path d="M625.4 345.2 L625.4 349.6 L625.4 356.0 L627.6 356.0 L630.5 356.0 L630.5 350.6 L635.3 350.6 L635.3 344.4 L635.3 339.7 L635.3 335.1 L635.3 337.2 L635.3 339.7" stroke="#12110c" stroke-width="1.5" fill="none" opacity="0.8"/>
<path d="M504.7 478.8 L498.2 478.8 L493.5 478.8 L493.5 476.7 L491.1 476.7 L491.1 471.9 L497.2 471.9 L499.4 471.9" stroke="#12110c" stroke-width="1.5" fill="none" opacity="0.8"/>
<path d="M394.8 105.3 L394.8 108.9 L389.7 108.9 L384.8 108.9 L379.3 108.9 L379.3 112.1 L379.3 114.4 L373.0 114.4 L373.0 119.5 L370.7 119.5 L370.7 121.8 L374.4 121.8 L374.4 124.7 L374.4 129.5 L374.4 131.9 L370.1 131.9 L370.1 126.1" stroke="#12110c" stroke-width="1.5" fill="none" opacity="0.8"/>
<path d="M687.9 165.3 L682.6 165.3 L686.4 165.3 L686.4 162.2 L688.7 162.2 L688.7 168.1 L688.7 170.6" stroke="#12110c" stroke-width="1.5" fill="none" opacity="0.8"/>
<path d="M764.2 104.3 L764.2 99.4 L764.2 96.7 L769.7 96.7 L773.2 96.7 L773.2 103.4 L773.2 109.2 L773.2 115.5 L773.2 122.0 L773.2 128.2 L769.2 128.2 L769.2 130.5 L764.1 130.5" stroke="#12110c" stroke-width="1.5" fill="none" opacity="0.8"/>
<path d="M702.9 593.3 L702.9 588.3 L707.9 588.3 L707.9 583.1 L707.9 581.0 L707.9 578.1 L707.9 574.8 L707.9 568.9 L707.9 563.6 L707.9 558.2 L707.9 555.2 L707.9 551.3" stroke="#12110c" stroke-width="1.5" fill="none" opacity="0.8"/>
<path d="M617.9 220.6 L617.9 222.9 L622.8 222.9 L625.3 222.9 L625.3 226.8 L630.5 226.8 L630.5 223.2 L633.6 223.2 L640.1 223.2 L640.1 219.4 L640.1 225.0 L636.7 225.0" stroke="#12110c" stroke-width="1.5" fill="none" opacity="0.8"/>
<path d="M736.8 437.9 L740.8 437.9 L738.1 437.9 L738.1 433.7 L738.1 430.6 L740.7 430.6 L740.7 428.3 L735.7 428.3" stroke="#12110c" stroke-width="1.5" fill="none" opacity="0.8"/>
<path d="M457.5 163.4 L452.3 163.4 L452.3 160.4 L455.8 160.4 L455.8 158.0 L455.8 154.4 L455.8 152.2 L455.8 145.4 L455.8 141.9 L455.8 138.2 L455.8 133.9 L449.7 133.9 L445.8 133.9 L445.8 136.5 L445.8 142.3" stroke="#12110c" stroke-width="1.5" fill="none" opacity="0.8"/>
<path d="M755.8 297.4 L759.0 297.4 L764.4 297.4 L764.4 299.7 L764.4 302.5 L764.4 308.0 L764.4 312.7 L766.8 312.7 L766.8 319.4 L769.8 319.4 L771.9 319.4 L771.9 314.6" stroke="#12110c" stroke-width="1.5" fill="none" opacity="0.8"/>
<path d="M529.3 252.5 L532.0 252.5 L532.0 255.1 L537.2 255.1 L537.2 258.6 L539.6 258.6 L543.2 258.6 L543.2 252.6 L543.2 246.5 L543.2 240.7 L543.2 238.2 L543.2 233.0" stroke="#12110c" stroke-width="1.5" fill="none" opacity="0.8"/>
<path d="M457.1 303.6 L457.1 306.6 L457.1 312.4 L457.1 316.6 L452.4 316.6 L452.4 312.1 L452.4 307.0 L446.9 307.0" stroke="#12110c" stroke-width="1.5" fill="none" opacity="0.8"/>
<path d="M575.3 419.4 L581.8 419.4 L585.6 419.4 L585.6 413.5 L589.4 413.5 L589.4 409.9 L593.3 409.9 L597.5 409.9 L601.1 409.9 L606.0 409.9 L608.5 409.9 L602.9 409.9 L599.3 409.9" stroke="#12110c" stroke-width="1.5" fill="none" opacity="0.8"/>
<path d="M442.3 320.5 L449.2 320.5 L452.9 320.5 L452.9 316.8 L459.4 316.8 L457.0 316.8 L453.5 316.8 L451.1 316.8 L447.1 316.8 L441.2 316.8 L434.6 316.8 L432.4 316.8 L427.3 316.8 L430.5 316.8" stroke="#12110c" stroke-width="1.5" fill="none" opacity="0.8"/>
<path d="M644.9 104.5 L644.9 106.7 L644.9 111.1 L644.9 117.1 L644.9 122.5 L644.9 127.1 L650.7 127.1 L650.7 129.3 L650.7 132.2 L650.7 136.6 L650.7 138.6 L650.7 144.5 L650.7 138.9 L650.7 136.7 L644.3 136.7" stroke="#12110c" stroke-width="1.5" fill="none" opacity="0.8"/>
<path d="M509.4 229.4 L504.9 229.4 L502.8 229.4 L502.8 223.9 L497.3 223.9 L497.3 221.2 L497.3 214.5 L494.9 214.5 L491.5 214.5 L487.7 214.5 L487.7 219.5 L484.4 219.5" stroke="#12110c" stroke-width="1.5" fill="none" opacity="0.8"/>
<path d="M649.7 149.0 L649.7 153.9 L649.7 160.0 L649.7 155.6 L644.4 155.6 L639.2 155.6 L639.2 149.6 L644.6 149.6 L648.6 149.6 L652.6 149.6 L652.6 147.5 L652.6 142.4 L658.0 142.4 L658.0 137.1 L658.0 131.0 L652.9 131.0 L652.9 127.2" stroke="#12110c" stroke-width="1.5" fill="none" opacity="0.8"/>
<path d="M593.6 592.5 L593.6 588.2 L590.0 588.2 L586.6 588.2 L582.6 588.2 L588.6 588.2 L593.3 588.2 L599.8 588.2 L599.8 584.9 L603.2 584.9 L603.2 589.8 L605.8 589.8 L605.8 595.7 L605.8 600.7 L605.8 604.1 L600.5 604.1" stroke="#12110c" stroke-width="1.5" fill="none" opacity="0.8"/>
<path d="M442.2 399.6 L442.2 395.8 L446.8 395.8 L446.8 390.9 L446.8 385.1 L451.0 385.1 L455.3 385.1 L459.4 385.1 L464.0 385.1 L464.0 381.6 L457.4 381.6" stroke="#12110c" stroke-width="1.5" fill="none" opacity="0.8"/>
<path d="M766.3 486.0 L768.6 486.0 L768.6 482.6 L770.7 482.6 L777.4 482.6 L777.4 480.0 L777.4 477.8 L777.4 471.6 L770.6 471.6 L770.6 469.4 L767.1 469.4 L769.5 469.4 L774.6 469.4 L774.6 471.7" stroke="#12110c" stroke-width="1.5" fill="none" opacity="0.8"/>
<path d="M423.4 509.5 L418.6 509.5 L418.6 514.9 L415.2 514.9 L415.2 510.9 L415.2 504.6 L415.2 501.8 L417.2 501.8 L417.2 506.8 L417.2 509.5 L417.2 515.5" stroke="#12110c" stroke-width="1.5" fill="none" opacity="0.8"/>
<path d="M442.9 163.4 L442.9 158.0 L442.9 151.8 L446.6 151.8 L439.7 151.8 L439.7 145.0 L439.7 141.6 L439.7 148.4 L439.7 150.7 L433.6 150.7 L429.4 150.7 L429.4 146.7 L426.8 146.7 L432.9 146.7 L432.9 143.9 L432.9 138.6 L437.1 138.6" stroke="#12110c" stroke-width="1.5" fill="none" opacity="0.8"/>
<path d="M577.8 222.3 L571.6 222.3 L567.5 222.3 L572.8 222.3 L575.8 222.3 L575.8 217.5 L575.8 211.5 L580.6 211.5 L574.9 211.5 L572.6 211.5 L572.6 207.1 L567.4 207.1 L567.4 203.9 L562.4 203.9 L559.6 203.9" stroke="#12110c" stroke-width="1.5" fill="none" opacity="0.8"/>
<path d="M414.1 149.9 L414.1 156.0 L414.1 160.9 L416.7 160.9 L423.3 160.9 L423.3 155.5 L428.6 155.5 L428.6 150.0 L431.3 150.0 L431.3 146.7 L428.0 146.7 L422.1 146.7 L422.1 142.9 L422.1 139.2 L425.7 139.2" stroke="#12110c" stroke-width="1.5" fill="none" opacity="0.8"/>
<path d="M408.0 480.9 L408.0 484.2 L412.4 484.2 L417.5 484.2 L423.6 484.2 L427.0 484.2 L427.0 481.2 L427.0 488.1 L433.0 488.1 L433.0 490.1 L439.9 490.1 L439.9 495.0 L444.4 495.0 L448.1 495.0 L448.1 500.2 L448.1 505.6 L455.0 505.6" stroke="#12110c" stroke-width="1.5" fill="none" opacity="0.8"/>
<path d="M585.6 407.5 L590.5 407.5 L590.5 414.3 L590.5 412.2 L588.3 412.2 L588.3 410.1 L584.8 410.1 L584.8 416.4 L584.8 419.6 L578.1 419.6 L572.1 419.6 L568.9 419.6 L568.9 422.7" stroke="#12110c" stroke-width="1.5" fill="none" opacity="0.8"/>
<path d="M652.9 597.8 L657.4 597.8 L657.4 600.3 L657.4 597.3 L654.7 597.3 L654.7 593.1 L654.7 587.2 L652.1 587.2 L652.1 583.7 L652.1 577.0 L648.1 577.0 L648.1 571.6 L652.0 571.6 L656.6 571.6" stroke="#12110c" stroke-width="1.5" fill="none" opacity="0.8"/>
<path d="M419.2 295.7 L419.2 301.3 L413.6 301.3 L413.6 305.4 L408.7 305.4 L408.7 299.7 L414.4 299.7 L419.1 299.7 L423.6 299.7 L428.5 299.7 L434.3 299.7 L438.4 299.7 L442.7 299.7 L445.2 299.7 L445.2 295.1 L450.3 295.1" stroke="#12110c" stroke-width="1.5" fill="none" opacity="0.8"/>
<path d="M466.0 549.3 L466.0 552.9 L460.9 552.9 L460.9 558.5 L455.6 558.5 L450.8 558.5 L447.4 558.5" stroke="#12110c" stroke-width="1.5" fill="none" opacity="0.8"/>
<path d="M364.4 550.5 L364.4 553.2 L364.4 557.8 L364.4 564.4 L358.7 564.4 L352.9 564.4 L352.9 569.3" stroke="#12110c" stroke-width="1.5" fill="none" opacity="0.8"/>
<path d="M332.3 381.0 L326.0 381.0 L326.0 384.7 L326.0 387.4 L326.0 390.6 L331.7 390.6 L331.7 394.9 L335.6 394.9 L335.6 400.6 L339.6 400.6 L335.8 400.6 L333.0 400.6 L333.0 403.9 L330.4 403.9 L326.2 403.9" stroke="#12110c" stroke-width="1.5" fill="none" opacity="0.8"/>
<path d="M313.1 379.0 L313.1 383.4 L313.1 381.2 L307.6 381.2 L307.6 377.9 L304.0 377.9 L304.0 371.4" stroke="#12110c" stroke-width="1.5" fill="none" opacity="0.8"/>
<path d="M666.7 509.4 L663.2 509.4 L661.0 509.4 L658.6 509.4 L654.1 509.4 L654.1 514.0 L654.1 510.1 L649.4 510.1 L649.4 516.8 L649.4 521.8 L649.4 526.0 L646.8 526.0 L640.9 526.0 L638.9 526.0 L638.9 532.4 L638.9 537.8 L638.9 541.9" stroke="#12110c" stroke-width="1.5" fill="none" opacity="0.8"/>
<path d="M607.8 196.1 L614.0 196.1 L614.0 203.0 L618.5 203.0 L624.3 203.0 L630.8 203.0 L635.9 203.0 L641.9 203.0 L648.4 203.0 L655.2 203.0 L661.9 203.0 L661.9 205.8 L668.2 205.8" stroke="#12110c" stroke-width="1.5" fill="none" opacity="0.8"/>
<path d="M328.1 197.9 L328.1 203.1 L328.1 206.7 L328.1 211.7 L334.1 211.7 L337.9 211.7 L342.0 211.7 L344.4 211.7 L344.4 214.7" stroke="#12110c" stroke-width="1.5" fill="none" opacity="0.8"/>
<path d="M381.0 253.2 L381.0 247.4 L381.0 254.3 L375.3 254.3 L375.3 258.8 L370.1 258.8 L370.1 262.2 L368.0 262.2 L368.0 266.9 L362.6 266.9 L358.8 266.9 L356.6 266.9 L356.6 272.9" stroke="#12110c" stroke-width="1.5" fill="none" opacity="0.8"/>
<path d="M517.5 241.5 L515.2 241.5 L515.2 236.8 L515.2 233.2 L511.4 233.2 L506.3 233.2 L501.4 233.2 L501.4 226.7 L498.0 226.7 L495.6 226.7 L495.6 220.6 L493.3 220.6" stroke="#12110c" stroke-width="1.5" fill="none" opacity="0.8"/>
<path d="M440.1 94.2 L440.1 98.5 L445.3 98.5 L439.9 98.5 L445.9 98.5 L445.9 100.9 L445.9 106.1 L448.3 106.1 L448.3 108.3 L454.9 108.3 L454.9 112.3 L454.9 116.2 L459.0 116.2 L459.0 119.2 L459.0 116.8" stroke="#12110c" stroke-width="1.5" fill="none" opacity="0.8"/>
<path d="M552.9 198.6 L557.8 198.6 L557.8 200.7 L557.8 207.5 L557.8 211.9 L557.8 216.8 L557.8 221.5" stroke="#12110c" stroke-width="1.5" fill="none" opacity="0.8"/>
<path d="M629.6 586.7 L629.6 590.7 L633.9 590.7 L638.2 590.7 L642.3 590.7 L642.3 595.1 L636.7 595.1 L636.7 599.4 L634.0 599.4 L634.0 603.5 L639.9 603.5 L636.1 603.5 L629.8 603.5 L625.9 603.5 L621.1 603.5" stroke="#12110c" stroke-width="1.5" fill="none" opacity="0.8"/>
<path d="M533.2 253.0 L533.2 257.3 L533.2 259.8 L533.2 264.3 L533.2 268.5 L533.2 275.5 L527.1 275.5 L520.6 275.5 L520.6 282.1 L525.7 282.1 L532.2 282.1 L537.3 282.1 L537.3 285.5 L532.5 285.5" stroke="#12110c" stroke-width="1.5" fill="none" opacity="0.8"/>
<path d="M340.7 439.6 L337.4 439.6 L343.1 439.6 L343.1 436.9 L343.1 430.9 L343.1 423.9 L338.4 423.9 L333.0 423.9 L326.4 423.9 L324.0 423.9 L324.0 419.4 L324.0 413.1 L324.0 409.9 L324.0 407.9 L319.1 407.9" stroke="#12110c" stroke-width="1.5" fill="none" opacity="0.8"/>
<path d="M522.4 145.9 L517.7 145.9 L517.7 150.1 L517.7 154.6 L519.9 154.6 L519.9 159.7 L519.9 165.8 L519.9 168.9 L516.2 168.9" stroke="#12110c" stroke-width="1.5" fill="none" opacity="0.8"/>
<path d="M702.0 436.5 L700.0 436.5 L693.6 436.5 L693.6 439.4 L693.6 441.5 L698.6 441.5 L704.4 441.5 L698.5 441.5 L698.5 447.3" stroke="#12110c" stroke-width="1.5" fill="none" opacity="0.8"/>
<path d="M351.7 232.0 L351.7 226.9 L351.7 220.9 L358.4 220.9 L358.4 216.5 L358.4 212.5 L362.0 212.5" stroke="#12110c" stroke-width="1.5" fill="none" opacity="0.8"/>
<path d="M301.0 584.0 L301.0 578.2 L307.8 578.2 L307.8 574.5 L307.8 569.1 L314.8 569.1 L319.2 569.1" stroke="#12110c" stroke-width="1.5" fill="none" opacity="0.8"/>
<path d="M533.8 317.2 L533.8 323.1 L533.8 317.6 L533.8 323.5 L539.9 323.5 L539.9 327.8 L539.9 330.8 L534.1 330.8 L534.1 337.7 L530.1 337.7 L530.1 341.5 L530.1 337.8" stroke="#12110c" stroke-width="1.5" fill="none" opacity="0.8"/>
<path d="M502.1 170.3 L502.1 165.9 L502.1 163.6 L498.4 163.6 L498.4 161.1 L492.8 161.1 L489.2 161.1 L487.0 161.1 L484.0 161.1 L481.6 161.1 L481.6 156.2 L477.7 156.2" stroke="#12110c" stroke-width="1.5" fill="none" opacity="0.8"/>
<path d="M601.2 411.3 L606.2 411.3 L611.5 411.3 L608.7 411.3 L608.7 404.7 L612.5 404.7 L612.5 406.9 L612.5 412.4 L612.5 416.3 L612.5 422.6 L612.5 427.0 L616.5 427.0" stroke="#12110c" stroke-width="1.5" fill="none" opacity="0.8"/>
<path d="M675.0 500.6 L669.3 500.6 L671.4 500.6 L671.4 505.4 L671.4 509.7 L671.4 516.6 L673.5 516.6 L673.5 518.8" stroke="#12110c" stroke-width="1.5" fill="none" opacity="0.8"/>
<path d="M507.2 109.1 L507.2 114.7 L507.2 117.8 L500.5 117.8 L496.9 117.8 L496.9 123.8 L493.4 123.8 L493.4 130.7 L493.4 136.8 L493.4 143.0 L493.4 136.9 L493.4 134.1 L493.4 131.3 L493.4 124.5 L493.4 118.0 L499.7 118.0 L506.1 118.0" stroke="#12110c" stroke-width="1.5" fill="none" opacity="0.8"/>
<path d="M746.4 254.0 L746.4 249.5 L749.6 249.5 L753.5 249.5 L753.5 246.3 L753.5 241.0 L749.2 241.0 L744.6 241.0 L741.9 241.0 L735.5 241.0 L729.8 241.0 L729.8 235.8 L724.9 235.8 L724.9 232.8 L724.9 228.3" stroke="#12110c" stroke-width="1.5" fill="none" opacity="0.8"/>
<path d="M667.8 528.1 L670.2 528.1 L677.1 528.1 L682.5 528.1 L686.6 528.1 L691.1 528.1 L696.9 528.1 L696.9 523.5 L693.0 523.5 L693.0 518.8 L689.4 518.8 L689.4 525.5 L689.4 530.3 L687.0 530.3" stroke="#12110c" stroke-width="1.5" fill="none" opacity="0.8"/>
<path d="M701.7 506.3 L707.9 506.3 L707.9 501.6 L707.9 495.4 L707.9 491.6 L707.9 487.1 L707.9 482.7 L707.9 480.2" stroke="#12110c" stroke-width="1.5" fill="none" opacity="0.8"/>
<path d="M604.6 175.2 L609.4 175.2 L609.4 181.0 L609.4 184.0 L609.4 186.4 L614.5 186.4 L614.5 191.1 L614.5 196.9 L614.5 201.3" stroke="#12110c" stroke-width="1.5" fill="none" opacity="0.8"/>
<path d="M338.4 320.8 L333.9 320.8 L330.7 320.8 L328.0 320.8 L328.0 317.6 L328.0 315.3 L328.0 311.1 L321.1 311.1 L317.3 311.1 L312.9 311.1 L312.9 306.2 L309.8 306.2 L305.7 306.2 L305.7 302.7 L301.6 302.7 L301.6 296.4" stroke="#12110c" stroke-width="1.5" fill="none" opacity="0.8"/>
<path d="M515.6 429.8 L519.5 429.8 L521.7 429.8 L524.3 429.8 L528.5 429.8 L523.8 429.8 L523.8 436.4 L523.8 439.4 L518.2 439.4 L513.5 439.4 L507.8 439.4 L503.5 439.4 L507.3 439.4 L514.0 439.4" stroke="#12110c" stroke-width="1.5" fill="none" opacity="0.8"/>
<path d="M464.4 134.8 L464.4 140.0 L469.2 140.0 L472.8 140.0 L472.8 137.3 L474.9 137.3 L474.9 132.8 L474.9 127.8 L474.9 121.9 L481.8 121.9 L481.8 126.1 L481.8 130.5 L481.8 135.2 L481.8 140.0 L485.1 140.0" stroke="#12110c" stroke-width="1.5" fill="none" opacity="0.8"/>
<path d="M336.2 276.3 L336.2 279.8 L336.2 283.2 L336.2 286.4 L342.1 286.4 L346.7 286.4 L351.5 286.4 L346.4 286.4" stroke="#12110c" stroke-width="1.5" fill="none" opacity="0.8"/>
<path d="M346.3 421.2 L352.0 421.2 L352.0 415.9 L352.0 413.1 L352.0 406.4 L352.0 402.2 L352.0 398.6 L352.0 392.9 L357.0 392.9 L359.7 392.9 L359.7 398.9" stroke="#12110c" stroke-width="1.5" fill="none" opacity="0.8"/>
<path d="M458.1 541.8 L465.0 541.8 L470.1 541.8 L470.1 536.8 L470.1 530.9 L470.1 526.6 L470.1 522.7 L470.1 516.9 L470.1 510.8 L470.1 505.8 L470.1 503.6 L475.5 503.6" stroke="#12110c" stroke-width="1.5" fill="none" opacity="0.8"/>
<path d="M371.9 276.4 L371.9 271.0 L378.0 271.0 L378.0 264.7 L378.0 261.3 L381.2 261.3 L388.0 261.3 L392.0 261.3 L396.1 261.3 L398.3 261.3 L402.4 261.3 L408.0 261.3 L408.0 256.4 L408.0 250.0 L414.6 250.0 L411.8 250.0 L411.8 243.3" stroke="#12110c" stroke-width="1.5" fill="none" opacity="0.8"/>
<path d="M760.8 345.9 L760.8 350.2 L754.7 350.2 L748.0 350.2 L744.1 350.2 L744.1 344.0 L744.1 341.1 L738.8 341.1 L733.5 341.1 L730.0 341.1 L730.0 344.0 L726.9 344.0 L726.9 341.3 L720.2 341.3 L720.2 338.0 L720.2 332.4 L713.5 332.4" stroke="#12110c" stroke-width="1.5" fill="none" opacity="0.8"/>
<path d="M553.7 558.2 L553.7 563.2 L553.7 567.0 L553.7 569.9 L553.7 575.8 L557.4 575.8 L560.7 575.8 L562.9 575.8 L568.1 575.8 L568.1 572.7 L568.1 569.8 L563.3 569.8 L560.5 569.8 L564.4 569.8" stroke="#12110c" stroke-width="1.5" fill="none" opacity="0.8"/>
<path d="M769.6 277.7 L762.8 277.7 L766.3 277.7 L769.6 277.7 L769.6 282.6 L769.6 286.5 L769.6 292.9 L764.4 292.9 L764.4 295.9 L759.7 295.9 L754.5 295.9 L754.5 291.0 L750.1 291.0 L747.4 291.0 L747.4 284.3" stroke="#12110c" stroke-width="1.5" fill="none" opacity="0.8"/>
<path d="M736.5 191.4 L736.5 196.4 L736.5 198.5 L736.5 204.5 L731.5 204.5 L731.5 208.5 L731.5 212.3 L727.7 212.3 L730.6 212.3 L735.4 212.3 L737.8 212.3 L743.7 212.3 L743.7 215.6 L741.3 215.6 L734.7 215.6" stroke="#12110c" stroke-width="1.5" fill="none" opacity="0.8"/>
<path d="M490.6 113.4 L490.6 117.9 L493.5 117.9 L500.4 117.9 L504.2 117.9 L504.2 124.9 L510.1 124.9 L510.1 130.1" stroke="#12110c" stroke-width="1.5" fill="none" opacity="0.8"/>
<path d="M385.6 357.9 L388.5 357.9 L388.5 355.4 L388.5 352.5 L388.5 345.7 L388.5 349.1 L388.5 343.8 L388.5 339.0 L388.5 333.5 L390.6 333.5 L393.6 333.5 L397.7 333.5" stroke="#12110c" stroke-width="1.5" fill="none" opacity="0.8"/>
<path d="M564.6 125.7 L564.6 123.2 L568.7 123.2 L572.9 123.2 L572.9 118.6 L572.9 121.8 L575.8 121.8 L575.8 125.0 L579.2 125.0 L583.3 125.0 L583.3 118.9 L583.3 113.7" stroke="#12110c" stroke-width="1.5" fill="none" opacity="0.8"/>
<path d="M613.7 439.7 L613.7 433.8 L613.7 427.7 L606.7 427.7 L606.7 434.6 L609.5 434.6 L615.9 434.6 L621.4 434.6 L621.4 438.2 L621.4 444.0 L627.4 444.0 L627.4 438.2" stroke="#12110c" stroke-width="1.5" fill="none" opacity="0.8"/>
<path d="M396.3 122.0 L401.5 122.0 L401.5 128.8 L404.4 128.8 L404.4 122.3 L404.4 115.5 L404.4 112.1 L410.5 112.1 L410.5 105.2 L410.5 99.6" stroke="#12110c" stroke-width="1.5" fill="none" opacity="0.8"/>
<path d="M383.2 409.3 L389.0 409.3 L389.0 413.1 L382.1 413.1 L377.3 413.1 L377.3 406.9 L381.7 406.9 L385.1 406.9 L387.6 406.9 L383.4 406.9" stroke="#12110c" stroke-width="1.5" fill="none" opacity="0.8"/>
<path d="M306.0 490.0 L302.3 490.0 L308.6 490.0 L308.6 493.0 L308.6 497.7 L308.6 501.5 L313.1 501.5 L318.4 501.5 L320.7 501.5 L327.2 501.5 L327.2 503.8" stroke="#12110c" stroke-width="1.5" fill="none" opacity="0.8"/>
<path d="M352.7 399.4 L352.7 404.0 L352.7 410.4 L355.5 410.4 L362.2 410.4 L362.2 413.2 L362.2 418.6 L364.8 418.6 L371.3 418.6 L375.0 418.6 L375.0 423.1" stroke="#12110c" stroke-width="1.5" fill="none" opacity="0.8"/>
<path d="M413.7 250.6 L417.2 250.6 L422.7 250.6 L427.5 250.6 L427.5 252.9 L427.5 255.3 L431.5 255.3 L435.8 255.3 L440.8 255.3 L440.8 258.0 L443.8 258.0 L446.0 258.0" stroke="#12110c" stroke-width="1.5" fill="none" opacity="0.8"/>
<path d="M400.7 107.5 L394.2 107.5 L394.2 111.1 L396.5 111.1 L401.2 111.1 L405.3 111.1 L405.3 117.5 L405.3 121.9" stroke="#12110c" stroke-width="1.5" fill="none" opacity="0.8"/>
<path d="M615.6 180.5 L620.0 180.5 L623.9 180.5 L630.7 180.5 L634.5 180.5 L634.5 176.4 L634.5 171.6 L641.5 171.6 L646.5 171.6 L646.5 177.8 L646.5 181.9 L652.8 181.9 L652.8 184.1 L657.5 184.1 L657.5 190.5 L657.5 194.2 L660.5 194.2" stroke="#12110c" stroke-width="1.5" fill="none" opacity="0.8"/>
<path d="M446.1 265.3 L439.8 265.3 L439.8 261.2 L433.8 261.2 L433.8 255.7 L433.8 253.1 L427.5 253.1" stroke="#12110c" stroke-width="1.5" fill="none" opacity="0.8"/>
<path d="M487.6 273.1 L487.6 267.9 L481.7 267.9 L481.7 271.5 L476.7 271.5 L476.7 277.0 L476.7 283.1 L479.6 283.1" stroke="#12110c" stroke-width="1.5" fill="none" opacity="0.8"/>
<path d="M569.5 429.6 L574.1 429.6 L580.7 429.6 L580.7 423.0 L577.3 423.0 L572.6 423.0 L569.4 423.0 L566.0 423.0 L566.0 420.2 L566.0 417.8 L566.0 413.0 L571.7 413.0 L578.5 413.0 L578.5 410.7" stroke="#12110c" stroke-width="1.5" fill="none" opacity="0.8"/>
<path d="M521.4 409.8 L521.4 416.3 L521.4 421.1 L528.3 421.1 L522.2 421.1 L516.8 421.1 L516.8 426.0 L516.8 428.9 L516.8 435.0" stroke="#12110c" stroke-width="1.5" fill="none" opacity="0.8"/>
<path d="M711.3 509.6 L711.3 507.1 L707.6 507.1 L703.5 507.1 L703.5 503.4 L703.5 497.8 L703.5 492.9 L698.8 492.9" stroke="#12110c" stroke-width="1.5" fill="none" opacity="0.8"/>
<path d="M757.3 420.3 L750.4 420.3 L748.2 420.3 L748.2 416.7 L742.5 416.7 L742.5 423.6 L742.5 425.7 L742.5 431.8 L748.3 431.8 L748.3 438.8 L743.1 438.8 L743.1 443.0 L743.1 449.9 L738.6 449.9 L738.6 452.9 L738.6 456.5" stroke="#12110c" stroke-width="1.5" fill="none" opacity="0.8"/>
<path d="M480.5 414.9 L480.5 419.0 L486.2 419.0 L486.2 422.4 L486.2 425.2 L486.2 430.3 L486.2 435.4 L486.2 441.7 L486.2 446.8 L486.2 453.1 L490.6 453.1 L490.6 457.2 L490.6 461.9 L490.6 466.2" stroke="#12110c" stroke-width="1.5" fill="none" opacity="0.8"/>
<path d="M760.7 283.2 L755.1 283.2 L751.5 283.2 L747.4 283.2 L751.3 283.2 L748.9 283.2 L748.9 278.9 L748.9 284.7 L744.5 284.7 L739.8 284.7 L733.8 284.7 L733.8 281.4" stroke="#12110c" stroke-width="1.5" fill="none" opacity="0.8"/>
<path d="M653.2 463.3 L653.2 456.6 L657.9 456.6 L657.9 453.2 L657.9 450.3 L660.2 450.3 L666.6 450.3 L666.6 445.2 L666.6 442.2 L661.7 442.2 L661.7 435.3 L658.4 435.3 L658.4 429.0 L658.4 423.5 L653.4 423.5 L646.9 423.5" stroke="#12110c" stroke-width="1.5" fill="none" opacity="0.8"/>
<path d="M592.0 463.2 L587.8 463.2 L587.8 460.9 L594.3 460.9 L600.1 460.9 L602.5 460.9 L604.6 460.9" stroke="#12110c" stroke-width="1.5" fill="none" opacity="0.8"/>
<path d="M533.0 387.0 L533.0 382.9 L533.0 377.2 L533.0 370.3 L533.0 366.8 L533.0 362.9 L533.0 365.3" stroke="#12110c" stroke-width="1.5" fill="none" opacity="0.8"/>
<path d="M410.7 111.4 L414.3 111.4 L414.3 118.2 L414.3 112.3 L419.7 112.3 L419.7 109.4 L419.7 102.4 L424.4 102.4 L431.0 102.4 L431.0 107.0 L436.0 107.0" stroke="#12110c" stroke-width="1.5" fill="none" opacity="0.8"/>
<path d="M470.6 167.4 L468.4 167.4 L466.4 167.4 L466.4 164.2 L466.4 159.5 L466.4 156.1 L466.4 152.2 L466.4 148.7 L468.5 148.7 L468.5 153.8 L468.5 158.0 L468.5 151.5 L470.9 151.5 L470.9 146.8 L470.9 144.2" stroke="#12110c" stroke-width="1.5" fill="none" opacity="0.8"/>
<path d="M373.3 558.5 L369.5 558.5 L369.5 562.4 L374.3 562.4 L379.3 562.4 L379.3 568.4 L384.7 568.4 L387.0 568.4 L387.0 564.8 L390.7 564.8 L397.5 564.8 L402.7 564.8 L402.7 569.7 L405.4 569.7" stroke="#12110c" stroke-width="1.5" fill="none" opacity="0.8"/>
<path d="M464.9 578.9 L464.9 574.4 L464.9 570.3 L461.0 570.3 L461.0 564.9 L461.0 560.8 L461.0 558.2 L461.0 552.5 L463.3 552.5 L463.3 549.3 L468.7 549.3 L472.1 549.3 L472.1 543.1 L472.1 545.3 L477.0 545.3 L477.0 547.5 L474.3 547.5" stroke="#12110c" stroke-width="1.5" fill="none" opacity="0.8"/>
<path d="M764.4 188.9 L764.4 184.4 L764.4 181.4 L761.1 181.4 L761.1 177.7 L761.1 173.5 L761.1 168.4 L761.1 161.9" stroke="#12110c" stroke-width="1.5" fill="none" opacity="0.8"/>
<rect x="495.5" y="205.5" width="29" height="29" fill="none" stroke="#141310" stroke-width="1.6" opacity="0.8"/>
<rect x="560.5" y="208.5" width="29" height="96" fill="none" stroke="#141310" stroke-width="1.6" opacity="0.8"/>
<rect x="485.5" y="342.5" width="44" height="64" fill="none" stroke="#141310" stroke-width="1.6" opacity="0.8"/>
<rect x="541.5" y="425.5" width="49" height="39" fill="none" stroke="#141310" stroke-width="1.6" opacity="0.8"/>
<rect x="541.5" y="470.5" width="49" height="34" fill="none" stroke="#141310" stroke-width="1.6" opacity="0.8"/>
<rect x="533.5" y="500.5" width="57" height="61" fill="none" stroke="#141310" stroke-width="1.6" opacity="0.8"/>
<rect x="598.5" y="355.5" width="54" height="59" fill="none" stroke="#141310" stroke-width="1.6" opacity="0.8"/>
<rect x="652.5" y="387.5" width="34" height="51" fill="none" stroke="#141310" stroke-width="1.6" opacity="0.8"/>
<rect x="478.5" y="235.5" width="81" height="79" fill="none" stroke="#141310" stroke-width="1.6" opacity="0.8"/>
<rect x="591.5" y="420.5" width="124" height="56" fill="none" stroke="#141310" stroke-width="1.6" opacity="0.8"/>
<rect x="699.5" y="501.5" width="45" height="46" fill="none" stroke="#141310" stroke-width="1.6" opacity="0.8"/>
<rect x="560.5" y="305.5" width="39" height="34" fill="none" stroke="#141310" stroke-width="1.6" opacity="0.8"/>
<rect x="642" y="212" width="42" height="100" fill="#2a2838"/><rect x="684" y="222" width="40" height="85" fill="#3a2a3a"/>
<path d="M470.0 84.0 L520.0 100.0 L560.0 114.0 L592.0 134.0 L622.0 151.0 L635.0 169.0 L655.0 184.0 L660.0 209.0 L685.0 219.0 L725.0 234.0 L740.0 274.0 L752.0 337.0 L755.0 362.0 L780.0 374.0 L785.0 407.0 L782.0 437.0 L775.0 477.0 L760.0 497.0 L745.0 517.0 L740.0 537.0 L720.0 552.0 L700.0 574.0 L685.0 597.0 L682.0 607.0 L900.0 607.0 L900.0 60.0 L470.0 60.0 Z" fill="#3766b2"/>
<clipPath id="oclip"><path d="M470.0 84.0 L520.0 100.0 L560.0 114.0 L592.0 134.0 L622.0 151.0 L635.0 169.0 L655.0 184.0 L660.0 209.0 L685.0 219.0 L725.0 234.0 L740.0 274.0 L752.0 337.0 L755.0 362.0 L780.0 374.0 L785.0 407.0 L782.0 437.0 L775.0 477.0 L760.0 497.0 L745.0 517.0 L740.0 537.0 L720.0 552.0 L700.0 574.0 L685.0 597.0 L682.0 607.0 L900.0 607.0 L900.0 60.0 L470.0 60.0 Z"/></clipPath><g clip-path="url(#oclip)">
<path d="M560.0 100.0 C680.0 150.0 770.0 260.0 800.0 420.0 C790.0 500 750 560 690.0 607" stroke="#2c58a0" stroke-width="1" fill="none" opacity="0.5"/>
<path d="M562.4 108.0 C681.6 155.6 767.6 264.0 796.8 421.6 C787.6 500 750 560 694.0 607" stroke="#2c58a0" stroke-width="1" fill="none" opacity="0.5"/>
<path d="M564.8 116.0 C683.2 161.2 765.2 268.0 793.6 423.2 C785.2 500 750 560 698.0 607" stroke="#2c58a0" stroke-width="1" fill="none" opacity="0.5"/>
<path d="M567.2 124.0 C684.8 166.8 762.8 272.0 790.4 424.8 C782.8 500 750 560 702.0 607" stroke="#2c58a0" stroke-width="1" fill="none" opacity="0.5"/>
<path d="M569.6 132.0 C686.4 172.4 760.4 276.0 787.2 426.4 C780.4 500 750 560 706.0 607" stroke="#2c58a0" stroke-width="1" fill="none" opacity="0.5"/>
<path d="M572.0 140.0 C688.0 178.0 758.0 280.0 784.0 428.0 C778.0 500 750 560 710.0 607" stroke="#2c58a0" stroke-width="1" fill="none" opacity="0.5"/>
<path d="M574.4 148.0 C689.6 183.6 755.6 284.0 780.8 429.6 C775.6 500 750 560 714.0 607" stroke="#2c58a0" stroke-width="1" fill="none" opacity="0.5"/>
<path d="M576.8 156.0 C691.2 189.2 753.2 288.0 777.6 431.2 C773.2 500 750 560 718.0 607" stroke="#2c58a0" stroke-width="1" fill="none" opacity="0.5"/>
<path d="M579.2 164.0 C692.8 194.8 750.8 292.0 774.4 432.8 C770.8 500 750 560 722.0 607" stroke="#2c58a0" stroke-width="1" fill="none" opacity="0.5"/>
<path d="M581.6 172.0 C694.4 200.4 748.4 296.0 771.2 434.4 C768.4 500 750 560 726.0 607" stroke="#2c58a0" stroke-width="1" fill="none" opacity="0.5"/>
</g>
<path d="M290.0 306.0 L330.0 310.0 L370.0 318.0 L405.0 330.0 L425.0 343.0 L435.0 365.0 L434.0 390.0 L422.0 410.0 L400.0 425.0 L378.0 427.0 L360.0 420.0 L345.0 418.0 L338.0 425.0 L342.0 440.0 L352.0 458.0 L365.0 478.0 L392.0 496.0 L388.0 502.0 L358.0 486.0 L340.0 466.0 L328.0 446.0 L323.0 425.0 L330.0 410.0 L350.0 405.0 L372.0 410.0 L395.0 412.0 L412.0 398.0 L420.0 378.0 L414.0 358.0 L398.0 347.0 L370.0 338.0 L330.0 333.0 L290.0 340.0 Z" fill="#3868b6"/>
<path d="M352 358 L400 356 L410 372 L405 398 L380 404 L352 400 Z" fill="#2a2720" opacity="0.85"/>
<ellipse cx="512" cy="272" rx="30" ry="35" fill="url(#purp)" opacity="0.7"/>
<ellipse cx="412" cy="284" rx="20" ry="20" fill="url(#purp)" opacity="0.9"/>
<ellipse cx="615" cy="390" rx="45" ry="35" fill="url(#purp)" opacity="0.9"/>
<rect x="480" y="414" width="12" height="64" fill="#6a22c8" opacity="0.45"/>
<rect x="541" y="409" width="50" height="15" fill="#6a22c8" opacity="0.35"/>
<ellipse cx="662" cy="410" rx="14" ry="22" fill="url(#purp)" opacity="0.9"/>
<ellipse cx="640" cy="280" rx="22" ry="35" fill="url(#purp)" opacity="0.8"/>
<ellipse cx="697" cy="262" rx="30" ry="40" fill="url(#heat1)"/>
<ellipse cx="628" cy="387" rx="17" ry="11" fill="url(#heat2)"/>
<ellipse cx="605" cy="389" rx="12" ry="9" fill="url(#heat2)" opacity="0.85"/>
<ellipse cx="614" cy="435" rx="24" ry="8" fill="url(#heat2)"/>
<ellipse cx="503" cy="464" rx="16" ry="8" fill="url(#heat2)"/>
<rect x="290" y="60" width="600" height="560" fill="url(#shade)"/>
</g>
<g fill="#2b2520"><path d="M440 88 L452 80 L468 82 L472 100 L448 104 Z"/><path d="M350 138 L360 128 L372 134 L368 148 L352 150 Z"/><path d="M318 158 L330 150 L342 156 L338 174 L322 176 Z"/><path d="M298 190 L312 184 L322 194 L316 208 L300 210 Z"/><rect x="477" y="71" width="5" height="10"/><path d="M766 432 L784 436 L786 486 L768 488 Z" fill="#3a2a24"/><path d="M780 372 L794 374 L792 392 L778 390 Z"/></g>
</svg>
<svg style="left:751.77px;top:76.10px;overflow:visible" width="66.3" height="27.0"><text x="3" y="19.50" textLength="60.30" lengthAdjust="spacingAndGlyphs" font-size="15" font-family="'Liberation Sans', sans-serif" font-weight="normal" fill="#f2f2f2" style="">1100, 670</text></svg>
<div class="b" style="left:309px;top:561px;width:101px;height:30px;background:#f7f7f7;border-radius:3px;"></div>
<svg style="left:311.90px;top:558.00px;overflow:visible" width="87.0" height="36.0"><text x="3" y="26.00" textLength="81.00" lengthAdjust="spacingAndGlyphs" font-size="20" font-family="'Liberation Sans', sans-serif" font-weight="normal" fill="#555" style="">30, 02:39</text></svg>
<svg style="left:428px;top:565px" width="219" height="26"><rect x="0" y="0" width="219" height="26" rx="2" fill="url(#cbar)"/></svg>
<svg style="left:432.99px;top:564.80px;overflow:visible" width="28.9" height="23.4"><text x="3" y="16.90" textLength="22.90" lengthAdjust="spacingAndGlyphs" font-size="13" font-family="'Liberation Sans', sans-serif" font-weight="normal" fill="#fff" style="">Low</text></svg>
<svg style="left:612.99px;top:564.80px;overflow:visible" width="29.6" height="23.4"><text x="3" y="16.90" textLength="23.60" lengthAdjust="spacingAndGlyphs" font-size="13" font-family="'Liberation Sans', sans-serif" font-weight="normal" fill="#333" style="">High</text></svg>
<div class="b" style="left:767px;top:558px;width:50px;height:36px;background:#b5b5b5;border-radius:3px;"></div>
<svg style="left:776.60px;top:557.50px;overflow:visible" width="30.0" height="36.0"><text x="3" y="26.00" textLength="24.00" lengthAdjust="spacingAndGlyphs" font-size="20" font-family="'Liberation Sans', sans-serif" font-weight="normal" fill="#555" style="">2D</text></svg>
<div class="b" style="left:295px;top:607px;width:535px;height:65px;background:#dcdcdc;"></div>
<div class="b" style="left:295px;top:607px;width:40px;height:65px;background:#ababab;"></div>
<svg style="left:300px;top:620px" width="30" height="40" viewBox="300 620 30 40"><path d="M307 630 L323 638.8 L307 647.5 Z" fill="#333"/></svg>
<div class="b" style="left:345px;top:613px;width:50px;height:53px;background:#f5f5f5;border-radius:4px;"></div>
<div class="b" style="left:692px;top:613px;width:50px;height:53px;background:#f5f5f5;border-radius:4px;"></div>
<div class="b" style="left:433px;top:633px;width:221px;height:15px;background:#f5f5f5;"></div>
<div class="b" style="left:400px;top:623px;width:34px;height:34px;background:#ababab;border-radius:4px;"></div>
<div class="b" style="left:653px;top:623px;width:34px;height:34px;background:#ababab;border-radius:4px;"></div>
<svg style="left:345.39px;top:616.50px;overflow:visible" width="22.3" height="19.8"><text x="3" y="14.30" textLength="16.30" lengthAdjust="spacingAndGlyphs" font-size="11" font-family="'Liberation Sans', sans-serif" font-weight="bold" fill="#333" style="">Day</text></svg>
<svg style="left:361.90px;top:610.80px;overflow:visible" width="14.5" height="30.6"><text x="3" y="22.10" textLength="8.50" lengthAdjust="spacingAndGlyphs" font-size="17" font-family="'Liberation Sans', sans-serif" font-weight="normal" fill="#444" style="">1</text></svg>
<svg style="left:345.61px;top:629.10px;overflow:visible" width="47.4" height="32.4"><text x="3" y="23.40" textLength="41.40" lengthAdjust="spacingAndGlyphs" font-size="18" font-family="'Liberation Sans', sans-serif" font-weight="normal" fill="#444" style="">00:00</text></svg>
<svg style="left:692.69px;top:616.50px;overflow:visible" width="22.2" height="19.8"><text x="3" y="14.30" textLength="16.20" lengthAdjust="spacingAndGlyphs" font-size="11" font-family="'Liberation Sans', sans-serif" font-weight="bold" fill="#333" style="">Day</text></svg>
<div class="b" style="left:752px;top:607px;width:78px;height:65px;background:#ababab;"></div>
<svg style="left:708.47px;top:610.60px;overflow:visible" width="24.3" height="30.6"><text x="3" y="22.10" textLength="18.30" lengthAdjust="spacingAndGlyphs" font-size="17" font-family="'Liberation Sans', sans-serif" font-weight="normal" fill="#444" style="">30</text></svg>
<svg style="left:692.81px;top:629.10px;overflow:visible" width="46.3" height="32.4"><text x="3" y="23.40" textLength="40.30" lengthAdjust="spacingAndGlyphs" font-size="18" font-family="'Liberation Sans', sans-serif" font-weight="normal" fill="#444" style="">02:39</text></svg>
<svg style="left:777.17px;top:611.10px;overflow:visible" width="27.6" height="30.6"><text x="3" y="22.10" textLength="21.60" lengthAdjust="spacingAndGlyphs" font-size="17" font-family="'Liberation Sans', sans-serif" font-weight="normal" fill="#555" style="">0.5</text></svg>
<svg style="left:756.81px;top:633.30px;overflow:visible" width="68.3" height="32.4"><text x="3" y="23.40" textLength="62.30" lengthAdjust="spacingAndGlyphs" font-size="18" font-family="'Liberation Sans', sans-serif" font-weight="normal" fill="#555" style="">days/sec</text></svg>
<div class="b" style="left:850px;top:20px;width:586px;height:68px;background:rgba(225,225,225,0.35);border-radius:3px;"></div>
<div class="b" style="left:961px;top:20px;width:1px;height:68px;background:rgba(0,0,0,0.07);"></div>
<div class="b" style="left:1096px;top:20px;width:1px;height:68px;background:rgba(0,0,0,0.07);"></div>
<div class="b" style="left:1212px;top:20px;width:1px;height:68px;background:rgba(0,0,0,0.07);"></div>
<div class="b" style="left:1293px;top:20px;width:1px;height:68px;background:rgba(0,0,0,0.07);"></div>
<div class="b" style="left:1348px;top:20px;width:1px;height:68px;background:rgba(0,0,0,0.07);"></div>
<svg style="left:856.69px;top:25.75px;overflow:visible" width="97.4" height="29.7"><text x="3" y="21.45" textLength="91.45" lengthAdjust="spacingAndGlyphs" font-size="16.5" font-family="'Liberation Sans', sans-serif" font-weight="normal" fill="#333" style="">Online Players</text></svg>
<svg style="left:1009.79px;top:25.75px;overflow:visible" width="37.4" height="29.7"><text x="3" y="21.45" textLength="31.45" lengthAdjust="spacingAndGlyphs" font-size="16.5" font-family="'Liberation Sans', sans-serif" font-weight="normal" fill="#333" style="">Time</text></svg>
<svg style="left:1103.49px;top:25.75px;overflow:visible" width="100.2" height="29.7"><text x="3" y="21.45" textLength="94.25" lengthAdjust="spacingAndGlyphs" font-size="16.5" font-family="'Liberation Sans', sans-serif" font-weight="normal" fill="#333" style="">Meteor Impact</text></svg>
<svg style="left:1228.79px;top:25.75px;overflow:visible" width="47.9" height="29.7"><text x="3" y="21.45" textLength="41.85" lengthAdjust="spacingAndGlyphs" font-size="16.5" font-family="'Liberation Sans', sans-serif" font-weight="normal" fill="#333" style="">Plants</text></svg>
<svg style="left:1300.59px;top:25.75px;overflow:visible" width="40.1" height="29.7"><text x="3" y="21.45" textLength="34.15" lengthAdjust="spacingAndGlyphs" font-size="16.5" font-family="'Liberation Sans', sans-serif" font-weight="normal" fill="#333" style="">Laws</text></svg>
<svg style="left:1354.79px;top:25.75px;overflow:visible" width="74.7" height="29.7"><text x="3" y="21.45" textLength="68.75" lengthAdjust="spacingAndGlyphs" font-size="16.5" font-family="'Liberation Sans', sans-serif" font-weight="normal" fill="#333" style="">World Size</text></svg>
<svg style="left:872.89px;top:50.45px;overflow:visible" width="64.7" height="29.7"><text x="3" y="21.45" textLength="58.65" lengthAdjust="spacingAndGlyphs" font-size="16.5" font-family="'Liberation Sans', sans-serif" font-weight="normal" fill="#6fad57" style="">7 / 765</text></svg>
<svg style="left:968.49px;top:50.45px;overflow:visible" width="119.8" height="29.7"><text x="3" y="21.45" textLength="113.85" lengthAdjust="spacingAndGlyphs" font-size="16.5" font-family="'Liberation Sans', sans-serif" font-weight="normal" fill="#6fad57" style="">Day 30 , 02:39</text></svg>
<svg style="left:1102.49px;top:50.45px;overflow:visible" width="102.2" height="29.7"><text x="3" y="21.45" textLength="96.25" lengthAdjust="spacingAndGlyphs" font-size="16.5" font-family="'Liberation Sans', sans-serif" font-weight="normal" fill="#6fad57" style="">21<tspan font-size="13"> hrs </tspan>20<tspan font-size="13"> mins</tspan></text></svg>
<svg style="left:1219.29px;top:50.45px;overflow:visible" width="65.9" height="29.7"><text x="3" y="21.45" textLength="59.95" lengthAdjust="spacingAndGlyphs" font-size="16.5" font-family="'Liberation Sans', sans-serif" font-weight="normal" fill="#6fad57" style="">497533</text></svg>
<svg style="left:1307.39px;top:50.45px;overflow:visible" width="25.9" height="29.7"><text x="3" y="21.45" textLength="19.95" lengthAdjust="spacingAndGlyphs" font-size="16.5" font-family="'Liberation Sans', sans-serif" font-weight="normal" fill="#6fad57" style="">60</text></svg>
<svg style="left:1356.09px;top:50.45px;overflow:visible" width="70.1" height="29.7"><text x="3" y="21.45" textLength="64.05" lengthAdjust="spacingAndGlyphs" font-size="16.5" font-family="'Liberation Sans', sans-serif" font-weight="normal" fill="#6fad57" style="">2,56km&#178;</text></svg>
<div class="b" style="left:850px;top:109px;width:1048px;height:563px;background:#dcdcdc;border-radius:3px;"></div>
<div class="t" style="left:351.00px;width:1200px;top:120.51px;font-size:23.5px;line-height:23.5px;color:#333;font-family:'Liberation Sans', sans-serif;text-align:center;font-weight:normal;">Data</div>
<div class="b" style="left:1049px;top:118px;width:48px;height:26px;background:#ababab;border-radius:3px;"></div>
<svg style="left:1049px;top:118px" width="48" height="26" viewBox="1049 118 48 26"><g stroke="#555" stroke-width="1.6" fill="none"><path d="M1058 131.8 H1072 M1074 131.8 H1088"/><path d="M1061 128.8 L1057.5 131.8 L1061 134.8 M1085 128.8 L1088.5 131.8 L1085 134.8" stroke="#333" stroke-width="1.3"/></g></svg>
<div class="t" style="left:873.50px;width:1200px;top:120.11px;font-size:23.5px;line-height:23.5px;color:#333;font-family:'Liberation Sans', sans-serif;text-align:center;font-weight:normal;">Graph</div>
<div class="b" style="left:1742px;top:118px;width:147px;height:26px;background:#ababab;border-radius:4px;"></div>
<div class="t" style="left:1215.50px;width:1200px;top:121.76px;font-size:18px;line-height:18px;color:#333;font-family:'Liberation Sans', sans-serif;text-align:center;font-weight:normal;transform:scaleX(0.98);transform-origin:50% 0;">Clear Categories</div>
<div class="b" style="left:853px;top:292px;width:186px;height:34px;background:#f5f5f5;"></div>
<svg style="left:868px;top:152.5px" width="14" height="14" viewBox="868 152.5 14 14"><path d="M871.2 155.2 L875.4 159.5 L871.2 163.8" stroke="#333" stroke-width="2.1" fill="none"/></svg>
<div class="t" style="left:885.30px;top:149.56px;font-size:18px;line-height:18px;color:#333;font-family:'Liberation Sans', sans-serif;text-align:left;font-weight:normal;">Farming</div>
<svg style="left:868px;top:180.3px" width="14" height="14" viewBox="868 180.3 14 14"><path d="M871.2 183.0 L875.4 187.3 L871.2 191.60000000000002" stroke="#333" stroke-width="2.1" fill="none"/></svg>
<div class="t" style="left:885.30px;top:177.36px;font-size:18px;line-height:18px;color:#333;font-family:'Liberation Sans', sans-serif;text-align:left;font-weight:normal;">Finance</div>
<svg style="left:868px;top:208.3px" width="14" height="14" viewBox="868 208.3 14 14"><path d="M871.2 211.0 L875.4 215.3 L871.2 219.60000000000002" stroke="#333" stroke-width="2.1" fill="none"/></svg>
<div class="t" style="left:885.30px;top:205.36px;font-size:18px;line-height:18px;color:#333;font-family:'Liberation Sans', sans-serif;text-align:left;font-weight:normal;">Harvesting</div>
<svg style="left:868px;top:236px" width="14" height="14" viewBox="868 236 14 14"><path d="M870.8 240.8 L874.6 244.8 L878.4 240.8" stroke="#333" stroke-width="2.1" fill="none"/></svg>
<div class="t" style="left:885.30px;top:233.26px;font-size:18px;line-height:18px;color:#333;font-family:'Liberation Sans', sans-serif;text-align:left;font-weight:normal;">Pollution ( 1 )</div>
<div class="t" style="left:874.00px;top:266.76px;font-size:18px;line-height:18px;color:#333;font-family:'Liberation Sans', sans-serif;text-align:left;font-weight:normal;">Drop Garbage</div>
<div class="t" style="left:874.00px;top:300.26px;font-size:18px;line-height:18px;color:#a06a6c;font-family:'Liberation Sans', sans-serif;text-align:left;font-weight:normal;">Pollute Air</div>
<svg style="left:868px;top:333.5px" width="14" height="14" viewBox="868 333.5 14 14"><path d="M871.2 336.2 L875.4 340.5 L871.2 344.8" stroke="#333" stroke-width="2.1" fill="none"/></svg>
<div class="t" style="left:885.30px;top:330.56px;font-size:18px;line-height:18px;color:#333;font-family:'Liberation Sans', sans-serif;text-align:left;font-weight:normal;">Settlements</div>
<svg style="left:868px;top:362px" width="14" height="14" viewBox="868 362 14 14"><path d="M871.2 364.7 L875.4 369 L871.2 373.3" stroke="#333" stroke-width="2.1" fill="none"/></svg>
<div class="t" style="left:885.30px;top:359.06px;font-size:18px;line-height:18px;color:#333;font-family:'Liberation Sans', sans-serif;text-align:left;font-weight:normal;">Specialties</div>
<svg style="left:868px;top:390px" width="14" height="14" viewBox="868 390 14 14"><path d="M871.2 392.7 L875.4 397 L871.2 401.3" stroke="#333" stroke-width="2.1" fill="none"/></svg>
<div class="t" style="left:885.30px;top:387.06px;font-size:18px;line-height:18px;color:#333;font-family:'Liberation Sans', sans-serif;text-align:left;font-weight:normal;">Work Party</div>
<svg style="left:864px;top:424px" width="14" height="14" viewBox="864 424 14 14"><path d="M867.2 426.7 L871.4 431 L867.2 435.3" stroke="#333" stroke-width="2.1" fill="none"/></svg>
<div class="t" style="left:877.00px;top:421.06px;font-size:18px;line-height:18px;color:#333;font-family:'Liberation Sans', sans-serif;text-align:left;font-weight:normal;">Plants</div>
<svg style="left:864px;top:456.8px" width="14" height="14" viewBox="864 456.8 14 14"><path d="M867.2 459.5 L871.4 463.8 L867.2 468.1" stroke="#333" stroke-width="2.1" fill="none"/></svg>
<div class="t" style="left:877.00px;top:453.86px;font-size:18px;line-height:18px;color:#333;font-family:'Liberation Sans', sans-serif;text-align:left;font-weight:normal;">Trees</div>
<svg style="left:864px;top:489.8px" width="14" height="14" viewBox="864 489.8 14 14"><path d="M867.2 492.5 L871.4 496.8 L867.2 501.1" stroke="#333" stroke-width="2.1" fill="none"/></svg>
<div class="t" style="left:877.00px;top:486.86px;font-size:18px;line-height:18px;color:#333;font-family:'Liberation Sans', sans-serif;text-align:left;font-weight:normal;">Animals</div>
<svg style="left:864px;top:523px" width="14" height="14" viewBox="864 523 14 14"><path d="M867.2 525.7 L871.4 530 L867.2 534.3" stroke="#333" stroke-width="2.1" fill="none"/></svg>
<div class="t" style="left:877.00px;top:520.06px;font-size:18px;line-height:18px;color:#333;font-family:'Liberation Sans', sans-serif;text-align:left;font-weight:normal;">Environment ( 2 )</div>
<svg style="left:864px;top:556px" width="14" height="14" viewBox="864 556 14 14"><path d="M867.2 558.7 L871.4 563 L867.2 567.3" stroke="#333" stroke-width="2.1" fill="none"/></svg>
<div class="t" style="left:877.00px;top:553.06px;font-size:18px;line-height:18px;color:#333;font-family:'Liberation Sans', sans-serif;text-align:left;font-weight:normal;">Citizens</div>
<svg style="left:864px;top:589px" width="14" height="14" viewBox="864 589 14 14"><path d="M867.2 591.7 L871.4 596 L867.2 600.3" stroke="#333" stroke-width="2.1" fill="none"/></svg>
<div class="t" style="left:877.00px;top:586.06px;font-size:18px;line-height:18px;color:#333;font-family:'Liberation Sans', sans-serif;text-align:left;font-weight:normal;">Civics</div>
<svg style="left:864px;top:622px" width="14" height="14" viewBox="864 622 14 14"><path d="M867.2 624.7 L871.4 629 L867.2 633.3" stroke="#333" stroke-width="2.1" fill="none"/></svg>
<div class="t" style="left:877.00px;top:619.06px;font-size:18px;line-height:18px;color:#333;font-family:'Liberation Sans', sans-serif;text-align:left;font-weight:normal;">Economy</div>
<div class="b" style="left:1039px;top:152px;width:10px;height:492px;background:#f1f1f1;"></div>
<div class="b" style="left:1039px;top:331px;width:10px;height:293px;background:#999999;"></div>
<div class="b" style="left:1049px;top:152px;width:849px;height:419px;background:#f7f7f7;"></div>
<div class="b" style="left:1150px;top:638px;width:640px;height:16px;background:#f5f5f5;"></div>
<div class="b" style="left:1142px;top:631px;width:28px;height:27px;background:#ababab;border-radius:4px;"></div>
<div class="b" style="left:1765px;top:631px;width:27px;height:27px;background:#ababab;border-radius:4px;"></div>
<div class="b" style="left:1067px;top:629px;width:65px;height:28px;background:#f5f5f5;border-radius:4px;"></div>
<div class="b" style="left:1804px;top:629px;width:66px;height:28px;background:#f5f5f5;border-radius:4px;"></div>
<div class="t" style="left:1072.00px;top:637.61px;font-size:13px;line-height:13px;color:#333;font-family:'Liberation Serif', serif;text-align:left;font-weight:normal;">Day</div>
<div class="t" style="left:-72.00px;width:1200px;top:636.45px;font-size:12px;line-height:12px;color:#444;font-family:'Liberation Serif', serif;text-align:right;font-weight:normal;">0</div>
<div class="t" style="left:1807.00px;top:637.61px;font-size:13px;line-height:13px;color:#333;font-family:'Liberation Serif', serif;text-align:left;font-weight:normal;">Day</div>
<div class="t" style="left:666.00px;width:1200px;top:636.45px;font-size:12px;line-height:12px;color:#444;font-family:'Liberation Serif', serif;text-align:right;font-weight:normal;">29.1</div>
<svg style="left:1049px;top:152px" width="849" height="419" viewBox="1049 152 849 419">
<path d="M1150 413.3 H1833" stroke="#dedede" stroke-width="1"/>
<path d="M1150 351.5 H1833" stroke="#dedede" stroke-width="1"/>
<path d="M1150 289.6 H1833" stroke="#dedede" stroke-width="1"/>
<path d="M1150 227.8 H1833" stroke="#dedede" stroke-width="1"/>
<path d="M1150 165.9 H1833" stroke="#dedede" stroke-width="1"/>
<path d="M1159.8 475.5 V484" stroke="#d0d0d0" stroke-width="1"/>
<path d="M1273.4 475.5 V484" stroke="#d0d0d0" stroke-width="1"/>
<path d="M1387.1 475.5 V484" stroke="#d0d0d0" stroke-width="1"/>
<path d="M1500.7 475.5 V484" stroke="#d0d0d0" stroke-width="1"/>
<path d="M1614.3 475.5 V484" stroke="#d0d0d0" stroke-width="1"/>
<path d="M1728.0 475.5 V484" stroke="#d0d0d0" stroke-width="1"/>
<path d="M1841.6 475.5 V484" stroke="#d0d0d0" stroke-width="1"/>
<path d="M1592 166 V475" stroke="#c8c8c8" stroke-width="1"/>
<rect x="1150.00" y="293.00" width="20.8" height="182.40" fill="#0022b8" stroke="#fff" stroke-width="1"/>
<rect x="1172.73" y="289.60" width="20.8" height="185.80" fill="#0022b8" stroke="#fff" stroke-width="1"/>
<rect x="1195.45" y="289.60" width="20.8" height="185.80" fill="#0022b8" stroke="#fff" stroke-width="1"/>
<rect x="1218.18" y="293.50" width="20.8" height="181.90" fill="#0022b8" stroke="#fff" stroke-width="1"/>
<rect x="1240.91" y="295.60" width="20.8" height="179.80" fill="#0022b8" stroke="#fff" stroke-width="1"/>
<rect x="1263.63" y="299.50" width="20.8" height="175.90" fill="#0022b8" stroke="#fff" stroke-width="1"/>
<rect x="1286.36" y="302.70" width="20.8" height="172.70" fill="#0022b8" stroke="#fff" stroke-width="1"/>
<rect x="1309.09" y="304.70" width="20.8" height="170.70" fill="#0022b8" stroke="#fff" stroke-width="1"/>
<rect x="1331.82" y="305.60" width="20.8" height="169.80" fill="#0022b8" stroke="#fff" stroke-width="1"/>
<rect x="1354.54" y="306.80" width="20.8" height="168.60" fill="#0022b8" stroke="#fff" stroke-width="1"/>
<rect x="1377.27" y="308.50" width="20.8" height="166.90" fill="#0022b8" stroke="#fff" stroke-width="1"/>
<rect x="1400.00" y="309.60" width="20.8" height="165.80" fill="#0022b8" stroke="#fff" stroke-width="1"/>
<rect x="1422.72" y="312.50" width="20.8" height="162.90" fill="#0022b8" stroke="#fff" stroke-width="1"/>
<rect x="1445.45" y="315.40" width="20.8" height="160.00" fill="#0022b8" stroke="#fff" stroke-width="1"/>
<rect x="1468.18" y="314.50" width="20.8" height="160.90" fill="#0022b8" stroke="#fff" stroke-width="1"/>
<rect x="1490.90" y="315.60" width="20.8" height="159.80" fill="#0022b8" stroke="#fff" stroke-width="1"/>
<rect x="1513.63" y="315.60" width="20.8" height="159.80" fill="#0022b8" stroke="#fff" stroke-width="1"/>
<rect x="1536.36" y="317.60" width="20.8" height="157.80" fill="#0022b8" stroke="#fff" stroke-width="1"/>
<rect x="1559.09" y="317.60" width="20.8" height="157.80" fill="#0022b8" stroke="#fff" stroke-width="1"/>
<rect x="1581.81" y="317.00" width="20.8" height="158.40" fill="#2040d2" stroke="#fff" stroke-width="1"/>
<rect x="1604.54" y="319.50" width="20.8" height="155.90" fill="#0022b8" stroke="#fff" stroke-width="1"/>
<rect x="1627.27" y="321.60" width="20.8" height="153.80" fill="#0022b8" stroke="#fff" stroke-width="1"/>
<rect x="1649.99" y="321.50" width="20.8" height="153.90" fill="#0022b8" stroke="#fff" stroke-width="1"/>
<rect x="1672.72" y="322.80" width="20.8" height="152.60" fill="#0022b8" stroke="#fff" stroke-width="1"/>
<rect x="1695.45" y="322.80" width="20.8" height="152.60" fill="#0022b8" stroke="#fff" stroke-width="1"/>
<rect x="1718.17" y="323.60" width="20.8" height="151.80" fill="#0022b8" stroke="#fff" stroke-width="1"/>
<rect x="1740.90" y="322.80" width="20.8" height="152.60" fill="#0022b8" stroke="#fff" stroke-width="1"/>
<rect x="1763.63" y="323.60" width="20.8" height="151.80" fill="#0022b8" stroke="#fff" stroke-width="1"/>
<rect x="1786.36" y="325.40" width="20.8" height="150.00" fill="#0022b8" stroke="#fff" stroke-width="1"/>
<rect x="1809.08" y="327.20" width="20.8" height="148.20" fill="#0022b8" stroke="#fff" stroke-width="1"/>
<path d="M1159.80 475.00 C1159.80 475.00 1173.44 475.00 1182.53 475.00 C1191.62 475.00 1196.16 475.00 1205.25 475.00 C1214.34 475.00 1218.89 475.00 1227.98 475.00 C1237.07 475.00 1241.62 475.00 1250.71 475.00 C1259.80 475.00 1264.34 475.00 1273.43 475.00 C1282.53 475.00 1287.07 475.00 1296.16 474.00 C1305.25 473.00 1309.80 450.40 1318.89 431.00 C1327.98 411.60 1332.53 377.00 1341.62 377.00 C1350.71 377.00 1355.25 414.00 1364.34 418.00 C1373.43 422.00 1377.98 422.00 1387.07 422.00 C1396.16 422.00 1400.71 420.40 1409.80 418.00 C1418.89 415.60 1423.43 414.20 1432.52 410.00 C1441.61 405.80 1446.16 405.60 1455.25 397.00 C1464.34 388.40 1468.89 375.20 1477.98 367.00 C1487.07 358.80 1491.61 365.20 1500.70 356.00 C1509.80 346.80 1514.34 321.00 1523.43 321.00 C1532.52 321.00 1537.07 322.00 1546.16 322.00 C1555.25 322.00 1559.80 322.00 1568.89 322.00 C1577.98 322.00 1582.52 318.70 1591.61 318.70 C1600.70 318.70 1605.25 318.70 1614.34 323.00 C1623.43 327.30 1627.98 343.20 1637.07 358.00 C1646.16 372.80 1650.70 391.00 1659.79 397.00 C1668.88 403.00 1673.43 403.00 1682.52 403.00 C1691.61 403.00 1696.16 374.00 1705.25 374.00 C1714.34 374.00 1718.88 426.00 1727.97 426.00 C1737.07 426.00 1741.61 412.00 1750.70 403.00 C1759.79 394.00 1764.34 381.00 1773.43 381.00 C1782.52 381.00 1787.07 414.80 1796.16 432.00 C1805.25 449.20 1818.88 467.00 1818.88 467.00" fill="none" stroke="#a67c7c" stroke-width="3.5" stroke-dasharray="3.5 5"/>
<path d="M1159.80 474.70 C1159.80 474.70 1173.44 474.66 1182.53 474.60 C1191.62 474.54 1196.16 474.52 1205.25 474.40 C1214.34 474.28 1218.89 474.32 1227.98 474.00 C1237.07 473.68 1241.62 473.54 1250.71 472.80 C1259.80 472.06 1264.34 470.96 1273.43 470.30 C1282.53 469.64 1287.07 470.08 1296.16 469.50 C1305.25 468.92 1309.80 469.38 1318.89 467.40 C1327.98 465.42 1332.53 467.40 1341.62 459.60 C1350.71 451.80 1355.25 392.40 1364.34 392.40 C1373.43 392.40 1377.98 394.48 1387.07 398.00 C1396.16 401.52 1400.71 409.00 1409.80 410.00 C1418.89 411.00 1423.43 411.00 1432.52 411.00 C1441.61 411.00 1446.16 409.40 1455.25 406.00 C1464.34 402.60 1468.89 401.60 1477.98 394.00 C1487.07 386.40 1491.61 371.00 1500.70 368.00 C1509.80 365.00 1514.34 368.00 1523.43 365.00 C1532.52 362.00 1537.07 344.00 1546.16 329.00 C1555.25 314.00 1559.80 300.94 1568.89 290.00 C1577.98 279.06 1582.52 274.30 1591.61 274.30 C1600.70 274.30 1605.25 278.70 1614.34 278.70 C1623.43 278.70 1627.98 267.50 1637.07 267.50 C1646.16 267.50 1650.70 267.50 1659.79 274.00 C1668.88 280.50 1673.43 323.80 1682.52 346.00 C1691.61 368.20 1696.16 385.00 1705.25 385.00 C1714.34 385.00 1718.88 381.88 1727.97 378.00 C1737.07 374.12 1741.61 365.60 1750.70 365.60 C1759.79 365.60 1764.34 412.00 1773.43 412.00 C1782.52 412.00 1787.07 392.80 1796.16 392.80 C1805.25 392.80 1818.88 419.40 1818.88 419.40" fill="none" stroke="#ea3b2c" stroke-width="3.2" stroke-linecap="round"/>
<circle cx="1592.2" cy="274.3" r="10" fill="#ea3b2c" opacity="0.22"/>
<rect x="1586.7" y="268.8" width="11" height="11" fill="#ea3b2c" stroke="#fff" stroke-width="0.6"/>
<circle cx="1592.2" cy="318.5" r="10" fill="#a67c7c" opacity="0.25"/>
<path d="M1592.2 311.5 L1598.5 323.2 L1585.9 323.2 Z" fill="#a67c7c" stroke="#fff" stroke-width="1"/>
<rect x="1365" y="346" width="211.5" height="73.5" fill="rgba(247,247,247,0.82)" stroke="#d2504c" stroke-width="1.2"/>
<circle cx="1376" cy="377" r="3.2" fill="#ea3b2c"/><circle cx="1376" cy="392" r="3.2" fill="#0022b8"/><circle cx="1376" cy="407" r="3.2" fill="#a67c7c"/>
<path d="M1586.5 382 L1586.5 396 L1589.6 393 L1591.8 398 L1593.6 397.2 L1591.5 392.3 L1595.6 392.3 Z" fill="#111" stroke="#fff" stroke-width="0.8"/>
</svg>
<div class="t" style="left:1372.6px;top:354.47px;font-size:12px;line-height:12px;font-family:'Liberation Serif', serif;color:#333">Day: <b>19</b></div>
<div class="t" style="left:1380px;top:369.37px;font-size:12px;line-height:12px;font-family:'Liberation Serif', serif;color:#333">Total Ground Pollution: <b>1627.11</b> ppm</div>
<div class="t" style="left:1380px;top:384.27px;font-size:12px;line-height:12px;font-family:'Liberation Serif', serif;color:#333">Plant Population: <b>511618.06</b> organisms</div>
<div class="t" style="left:1380px;top:399.17px;font-size:12px;line-height:12px;font-family:'Liberation Serif', serif;color:#333">Pollute Air: <b>505.84</b> co2 ppm</div>
<div class="t" style="left:-106.00px;width:1200px;top:471.89px;font-size:11px;line-height:11px;color:#666;font-family:'Liberation Serif', serif;text-align:right;font-weight:normal;">0</div>
<div class="t" style="left:-106.00px;width:1200px;top:410.03px;font-size:11px;line-height:11px;color:#666;font-family:'Liberation Serif', serif;text-align:right;font-weight:normal;">200</div>
<div class="t" style="left:-106.00px;width:1200px;top:348.17px;font-size:11px;line-height:11px;color:#666;font-family:'Liberation Serif', serif;text-align:right;font-weight:normal;">400</div>
<div class="t" style="left:-106.00px;width:1200px;top:286.31px;font-size:11px;line-height:11px;color:#666;font-family:'Liberation Serif', serif;text-align:right;font-weight:normal;">600</div>
<div class="t" style="left:-106.00px;width:1200px;top:224.45px;font-size:11px;line-height:11px;color:#666;font-family:'Liberation Serif', serif;text-align:right;font-weight:normal;">800</div>
<div class="t" style="left:-106.00px;width:1200px;top:162.59px;font-size:11px;line-height:11px;color:#666;font-family:'Liberation Serif', serif;text-align:right;font-weight:normal;">1000</div>
<div class="t" style="left:-53.00px;width:1200px;top:468.71px;font-size:13px;line-height:13px;color:#111;font-family:'Liberation Serif', serif;text-align:right;font-weight:bold;">0</div>
<div class="t" style="left:-53.00px;width:1200px;top:406.85px;font-size:13px;line-height:13px;color:#444;font-family:'Liberation Serif', serif;text-align:right;font-weight:normal;">500</div>
<div class="t" style="left:-53.00px;width:1200px;top:344.99px;font-size:13px;line-height:13px;color:#444;font-family:'Liberation Serif', serif;text-align:right;font-weight:normal;">1000</div>
<div class="t" style="left:-53.00px;width:1200px;top:283.13px;font-size:13px;line-height:13px;color:#444;font-family:'Liberation Serif', serif;text-align:right;font-weight:normal;">1500</div>
<div class="t" style="left:-53.00px;width:1200px;top:221.27px;font-size:13px;line-height:13px;color:#444;font-family:'Liberation Serif', serif;text-align:right;font-weight:normal;">2000</div>
<div class="t" style="left:-53.00px;width:1200px;top:159.41px;font-size:13px;line-height:13px;color:#444;font-family:'Liberation Serif', serif;text-align:right;font-weight:normal;">2500</div>
<div class="t" style="left:1835.50px;top:471.89px;font-size:11px;line-height:11px;color:#666;font-family:'Liberation Serif', serif;text-align:left;font-weight:normal;">0k</div>
<div class="t" style="left:1835.50px;top:410.03px;font-size:11px;line-height:11px;color:#666;font-family:'Liberation Serif', serif;text-align:left;font-weight:normal;">200k</div>
<div class="t" style="left:1835.50px;top:348.17px;font-size:11px;line-height:11px;color:#666;font-family:'Liberation Serif', serif;text-align:left;font-weight:normal;">400k</div>
<div class="t" style="left:1835.50px;top:286.31px;font-size:11px;line-height:11px;color:#666;font-family:'Liberation Serif', serif;text-align:left;font-weight:normal;">600k</div>
<div class="t" style="left:1835.50px;top:224.45px;font-size:11px;line-height:11px;color:#666;font-family:'Liberation Serif', serif;text-align:left;font-weight:normal;">800k</div>
<div class="t" style="left:1835.50px;top:162.59px;font-size:11px;line-height:11px;color:#666;font-family:'Liberation Serif', serif;text-align:left;font-weight:normal;">1 000k</div>
<div class="t" style="left:559.80px;width:1200px;top:485.31px;font-size:13px;line-height:13px;color:#111;font-family:'Liberation Serif', serif;text-align:center;font-weight:bold;">0</div>
<div class="t" style="left:673.43px;width:1200px;top:485.31px;font-size:13px;line-height:13px;color:#555;font-family:'Liberation Serif', serif;text-align:center;font-weight:normal;">5</div>
<div class="t" style="left:787.07px;width:1200px;top:485.31px;font-size:13px;line-height:13px;color:#555;font-family:'Liberation Serif', serif;text-align:center;font-weight:normal;">10</div>
<div class="t" style="left:900.70px;width:1200px;top:485.31px;font-size:13px;line-height:13px;color:#555;font-family:'Liberation Serif', serif;text-align:center;font-weight:normal;">15</div>
<div class="t" style="left:1014.34px;width:1200px;top:485.31px;font-size:13px;line-height:13px;color:#555;font-family:'Liberation Serif', serif;text-align:center;font-weight:normal;">20</div>
<div class="t" style="left:1127.97px;width:1200px;top:485.31px;font-size:13px;line-height:13px;color:#555;font-family:'Liberation Serif', serif;text-align:center;font-weight:normal;">25</div>
<div class="t" style="left:1241.61px;width:1200px;top:485.31px;font-size:13px;line-height:13px;color:#555;font-family:'Liberation Serif', serif;text-align:center;font-weight:normal;">30</div>
<div class="t" style="left:1802.80px;top:502.84px;font-size:15px;line-height:15px;color:#444;font-family:'Liberation Serif', serif;text-align:left;font-weight:normal;">Days</div>
<div class="t" style="left:997.5999999999999px;top:314.7px;width:120px;text-align:center;font-size:11px;line-height:12px;font-family:'Liberation Serif', serif;color:#9a6a6a;transform:rotate(-90deg);">CO2 PPM</div>
<div class="t" style="left:1045.3px;top:315px;width:120px;text-align:center;font-size:11px;line-height:12px;font-family:'Liberation Serif', serif;color:#c4a4d8;transform:rotate(-90deg);">PPM</div>
<div class="t" style="left:1819.6px;top:315px;width:120px;text-align:center;font-size:11px;line-height:12px;font-family:'Liberation Serif', serif;color:#3344a0;transform:rotate(90deg);">Organi sms</div>
<svg style="left:1050px;top:535px" width="300" height="25" viewBox="1050 535 300 25"><path d="M1056 548.6 H1072" stroke="#ea3b2c" stroke-width="4"/><rect x="1202" y="541.5" width="15.5" height="12" fill="#0022b8"/><rect x="1313" y="546.5" width="4" height="4" fill="#a67c7c"/><rect x="1321" y="546.5" width="4" height="4" fill="#a67c7c"/></svg>
<div class="t" style="left:1077.60px;top:542.11px;font-size:13px;line-height:13px;color:#333;font-family:'Liberation Serif', serif;text-align:left;font-weight:normal;">Total Ground Pollution</div>
<div class="t" style="left:1222.80px;top:542.11px;font-size:13px;line-height:13px;color:#333;font-family:'Liberation Serif', serif;text-align:left;font-weight:normal;">Plant Population</div>
<div class="t" style="left:1335.60px;top:542.11px;font-size:13px;line-height:13px;color:#333;font-family:'Liberation Serif', serif;text-align:left;font-weight:normal;">Pollute Air</div>
</body></html>
